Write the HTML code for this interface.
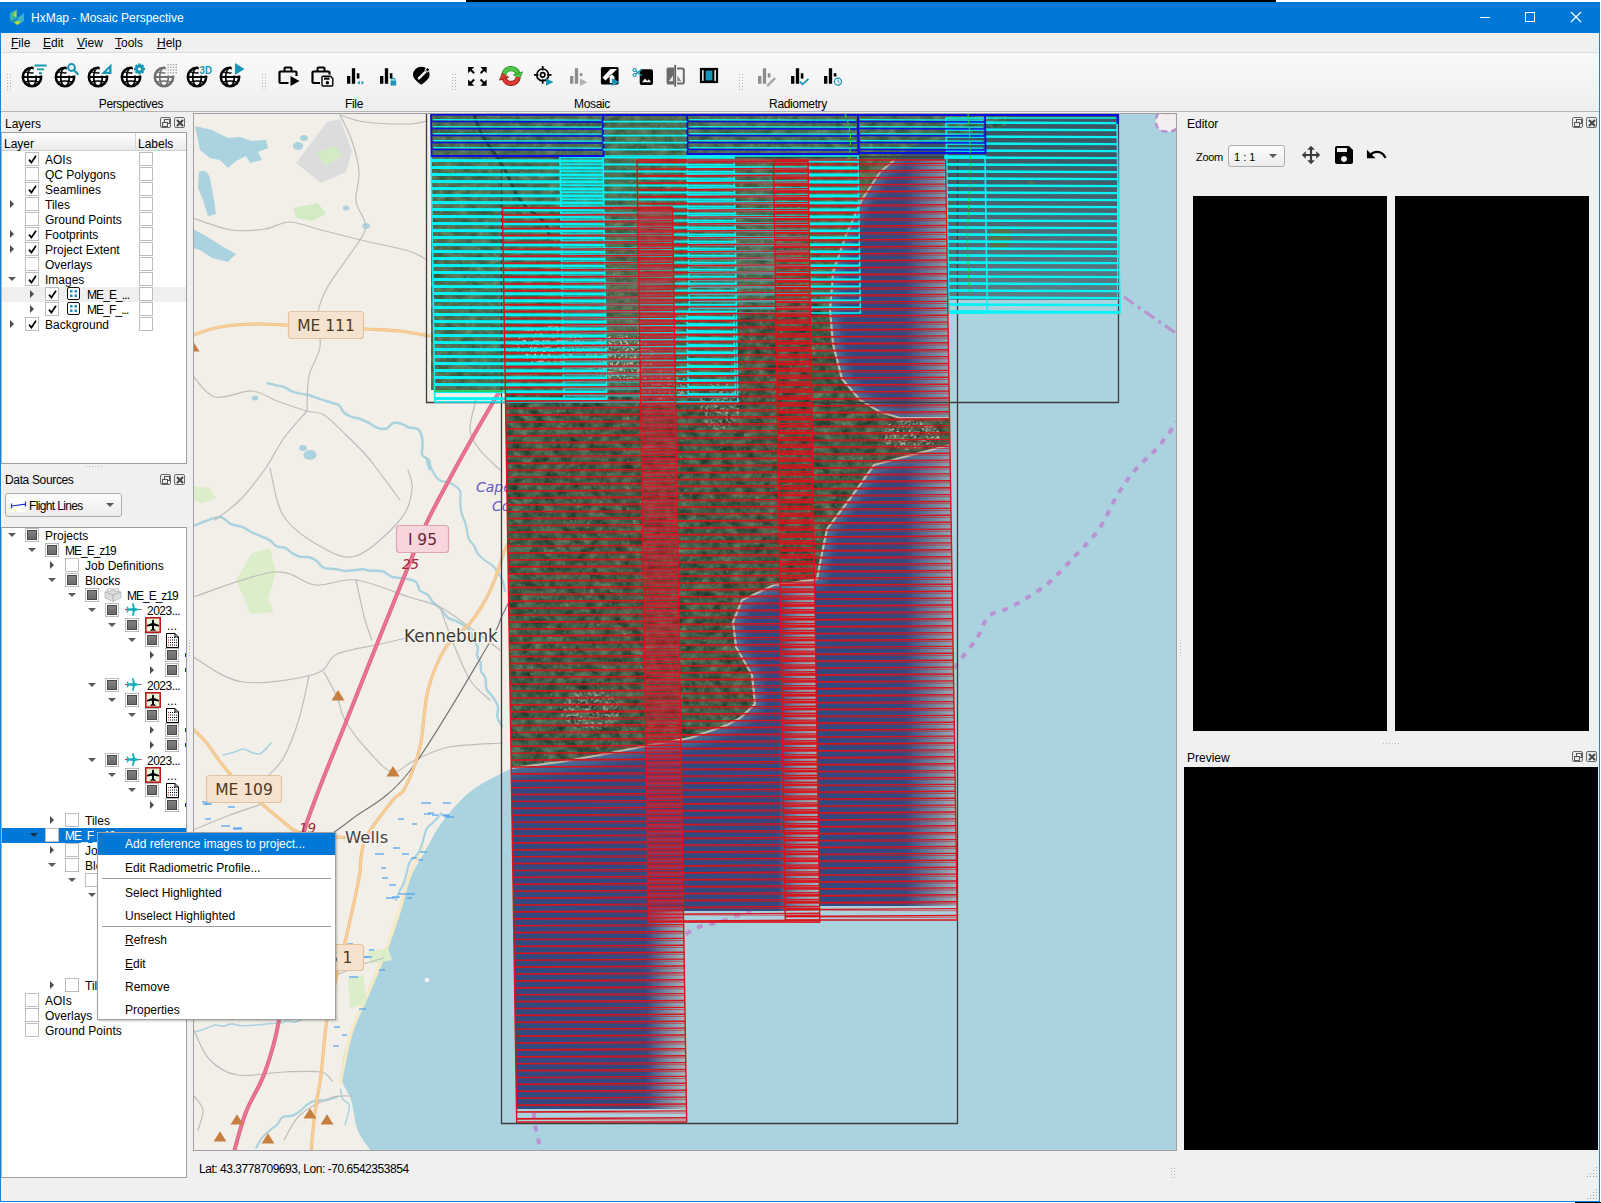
<!DOCTYPE html><html><head><meta charset="utf-8"><title>HxMap - Mosaic Perspective</title><style>
*{box-sizing:border-box;margin:0;padding:0}
html,body{width:1601px;height:1203px;overflow:hidden;background:#f0f0f0}
body{position:relative;font-family:"Liberation Sans","DejaVu Sans",sans-serif;font-size:12px;color:#000;line-height:15px}
.a{position:absolute}
.t{position:absolute;white-space:nowrap;line-height:15px;height:15px}
.cb{position:absolute;width:14px;height:14px;background:#fff;border:1px solid #bdbdbd}
.cb.p::after{content:"";position:absolute;left:1px;top:1px;width:8px;height:8px;background:linear-gradient(#808080,#6a6a6a);border:1px solid #4a4a4a}
.cb.c svg{position:absolute;left:1.500px;top:1.500px}
.ar{position:absolute;width:0;height:0;border-style:solid}
.ar.r{border-width:4px 0 4px 4px;border-color:transparent transparent transparent #4d4d4d}
.ar.d{border-width:4px 4px 0 4px;border-color:#5a5a5a transparent transparent transparent}
.db{position:absolute;width:11px;height:11px;border:1px solid #6b6b6b;border-radius:2px;background:#ededed}
u{text-decoration:underline;text-underline-offset:1px}
</style></head><body><div class="a" style="left:0;top:0;width:1601px;height:2px;background:#fff"></div><div class="a" style="left:466px;top:0;width:810px;height:2px;background:#000"></div><div class="a" style="left:1600px;top:0;width:1px;height:1203px;background:#fff"></div><div class="a" style="left:0;top:1202px;width:1601px;height:1px;background:#fff"></div><div class="a" style="left:1575px;top:1202px;width:26px;height:1px;background:#000"></div><div class="a" style="left:0;top:2px;width:1600px;height:1200px;border:1px solid #1883d7;border-top:none;background:#f0f0f0"></div><div class="a" style="left:0;top:2px;width:1600px;height:31px;background:#0078d7"></div><svg class="a" style="left:9px;top:9px" width="16" height="17" viewBox="0 0 16 17"><path d="M1 4L7.500 0.500V9L1 12Z" fill="#3db0b0"/><path d="M4 6L7.500 0.500V9Z" fill="#a6d63a"/><path d="M8.500 9L15 4V12L8.500 16Z" fill="#3ab4c4"/><path d="M1 12L7.500 9L8.500 16L5 13.500Z" fill="#2a9aa8"/><path d="M5 13.500L8.500 16L12 12.500L8 12Z" fill="#b5dc3c"/></svg><div class="t" style="left:31px;top:11px;color:#fff">HxMap - Mosaic Perspective</div><svg class="a" style="left:1470px;top:2px" width="130" height="31" viewBox="0 0 130 31"><g stroke="#fff" stroke-width="1" fill="none"><path d="M10 15.500H20"/><rect x="55.500" y="10.500" width="9" height="9"/><path d="M101 10L111 20M111 10L101 20" stroke-width="1.200"/></g></svg><div class="a" style="left:1px;top:33px;width:1598px;height:19px;background:#f0f0f0"></div><div class="a" style="left:1px;top:52px;width:1598px;height:1px;background:#dcdcdc"></div><div class="t" style="left:11px;top:36px;"><u>F</u>ile</div><div class="t" style="left:43px;top:36px;"><u>E</u>dit</div><div class="t" style="left:77px;top:36px;"><u>V</u>iew</div><div class="t" style="left:115px;top:36px;"><u>T</u>ools</div><div class="t" style="left:157px;top:36px;"><u>H</u>elp</div><div class="a" style="left:1px;top:53px;width:1598px;height:58px;background:linear-gradient(#fafafa,#f3f3f3 60%,#eeeeee)"></div><div class="a" style="left:1px;top:111px;width:1598px;height:1px;background:#b4b4b4"></div><svg class="a" style="left:0;top:0" width="0" height="0"><defs><clipPath id="gclip"><path d="M0 0H16.500V14.500H30V30H0Z"/></clipPath></defs></svg><div class="a" style="left:6px;top:73px;width:5px;height:18px;background-image:radial-gradient(circle,#b0b0b0 0.700px,transparent 1px);background-size:3px 3px"></div><div class="a" style="left:261px;top:73px;width:5px;height:18px;background-image:radial-gradient(circle,#b0b0b0 0.700px,transparent 1px);background-size:3px 3px"></div><div class="a" style="left:451px;top:73px;width:5px;height:18px;background-image:radial-gradient(circle,#b0b0b0 0.700px,transparent 1px);background-size:3px 3px"></div><div class="a" style="left:738px;top:73px;width:5px;height:18px;background-image:radial-gradient(circle,#b0b0b0 0.700px,transparent 1px);background-size:3px 3px"></div><svg class="a" style="left:17px;top:61px" width="30" height="30" viewBox="0 0 30 30"><g fill="none" stroke="#000" stroke-width="2.5" clip-path="url(#gclip)">
<circle cx="15" cy="16" r="9.2"/><ellipse cx="15" cy="16" rx="4.3" ry="9.2" stroke-width="1.700"/>
<path d="M6 16H24" stroke-width="1.800"/><path d="M7.500 10.600Q15 13.200 22.500 10.600M7.500 21.400Q15 18.800 22.500 21.400" stroke-width="1.500"/></g><path d="M17.500 4.500H29.500M20 8.400H27M22 12.300H25" stroke="#1796b5" stroke-width="1.900" fill="none"/></svg><svg class="a" style="left:50px;top:61px" width="30" height="30" viewBox="0 0 30 30"><g fill="none" stroke="#000" stroke-width="2.5" clip-path="url(#gclip)">
<circle cx="15" cy="16" r="9.2"/><ellipse cx="15" cy="16" rx="4.3" ry="9.2" stroke-width="1.700"/>
<path d="M6 16H24" stroke-width="1.800"/><path d="M7.500 10.600Q15 13.200 22.500 10.600M7.500 21.400Q15 18.800 22.500 21.400" stroke-width="1.500"/></g><circle cx="21.500" cy="6.500" r="3.400" fill="none" stroke="#1796b5" stroke-width="2"/><path d="M24 9.200L28.500 13.800" stroke="#1796b5" stroke-width="2.300"/></svg><svg class="a" style="left:83px;top:61px" width="30" height="30" viewBox="0 0 30 30"><g fill="none" stroke="#000" stroke-width="2.5" clip-path="url(#gclip)">
<circle cx="15" cy="16" r="9.2"/><ellipse cx="15" cy="16" rx="4.3" ry="9.2" stroke-width="1.700"/>
<path d="M6 16H24" stroke-width="1.800"/><path d="M7.500 10.600Q15 13.200 22.500 10.600M7.500 21.400Q15 18.800 22.500 21.400" stroke-width="1.500"/></g><path d="M28.500 2.500V13H18Z M26.200 7.800V10.800H23.200Z" fill="#1796b5" fill-rule="evenodd"/></svg><svg class="a" style="left:116px;top:61px" width="30" height="30" viewBox="0 0 30 30"><g fill="none" stroke="#000" stroke-width="2.5" clip-path="url(#gclip)">
<circle cx="15" cy="16" r="9.2"/><ellipse cx="15" cy="16" rx="4.3" ry="9.2" stroke-width="1.700"/>
<path d="M6 16H24" stroke-width="1.800"/><path d="M7.500 10.600Q15 13.200 22.500 10.600M7.500 21.400Q15 18.800 22.500 21.400" stroke-width="1.500"/></g><circle cx="23.500" cy="8" r="3.100" fill="none" stroke="#1796b5" stroke-width="2.600"/><g stroke="#1796b5" stroke-width="2.300"><path d="M23.500 2.500V13.500M18 8H29M19.600 4.100L27.400 11.900M27.400 4.100L19.600 11.900"/></g><circle cx="23.500" cy="8" r="1.600" fill="#f8f8f8"/></svg><svg class="a" style="left:149px;top:61px" width="30" height="30" viewBox="0 0 30 30"><g fill="none" stroke="#6e6e6e" stroke-width="2.5" clip-path="url(#gclip)">
<circle cx="15" cy="16" r="9.2"/><ellipse cx="15" cy="16" rx="4.3" ry="9.2" stroke-width="1.700"/>
<path d="M6 16H24" stroke-width="1.800"/><path d="M7.500 10.600Q15 13.200 22.500 10.600M7.500 21.400Q15 18.800 22.500 21.400" stroke-width="1.500"/></g><rect x="18.5" y="3.0" width="1.300" height="1.300" fill="#9a9a9a"/><rect x="18.5" y="5.7" width="1.300" height="1.300" fill="#9a9a9a"/><rect x="18.5" y="8.4" width="1.300" height="1.300" fill="#9a9a9a"/><rect x="18.5" y="11.1" width="1.300" height="1.300" fill="#9a9a9a"/><rect x="21.2" y="3.0" width="1.300" height="1.300" fill="#9a9a9a"/><rect x="21.2" y="5.7" width="1.300" height="1.300" fill="#9a9a9a"/><rect x="21.2" y="8.4" width="1.300" height="1.300" fill="#9a9a9a"/><rect x="21.2" y="11.1" width="1.300" height="1.300" fill="#9a9a9a"/><rect x="23.9" y="3.0" width="1.300" height="1.300" fill="#9a9a9a"/><rect x="23.9" y="5.7" width="1.300" height="1.300" fill="#9a9a9a"/><rect x="23.9" y="8.4" width="1.300" height="1.300" fill="#9a9a9a"/><rect x="23.9" y="11.1" width="1.300" height="1.300" fill="#9a9a9a"/><rect x="26.6" y="3.0" width="1.300" height="1.300" fill="#9a9a9a"/><rect x="26.6" y="5.7" width="1.300" height="1.300" fill="#9a9a9a"/><rect x="26.6" y="8.4" width="1.300" height="1.300" fill="#9a9a9a"/><rect x="26.6" y="11.1" width="1.300" height="1.300" fill="#9a9a9a"/></svg><svg class="a" style="left:182px;top:61px" width="30" height="30" viewBox="0 0 30 30"><g fill="none" stroke="#000" stroke-width="2.5" clip-path="url(#gclip)">
<circle cx="15" cy="16" r="9.2"/><ellipse cx="15" cy="16" rx="4.3" ry="9.2" stroke-width="1.700"/>
<path d="M6 16H24" stroke-width="1.800"/><path d="M7.500 10.600Q15 13.200 22.500 10.600M7.500 21.400Q15 18.800 22.500 21.400" stroke-width="1.500"/></g><text x="17.500" y="12.500" font-family="Liberation Sans,sans-serif" font-weight="bold" font-size="11" fill="#1796b5" textLength="12.500" lengthAdjust="spacingAndGlyphs">3D</text></svg><svg class="a" style="left:215px;top:61px" width="30" height="30" viewBox="0 0 30 30"><g fill="none" stroke="#000" stroke-width="2.5" clip-path="url(#gclip)">
<circle cx="15" cy="16" r="9.2"/><ellipse cx="15" cy="16" rx="4.3" ry="9.2" stroke-width="1.700"/>
<path d="M6 16H24" stroke-width="1.800"/><path d="M7.500 10.600Q15 13.200 22.500 10.600M7.500 21.400Q15 18.800 22.500 21.400" stroke-width="1.500"/></g><path d="M20 2L29.500 8L20 14Z" fill="#1796b5"/></svg><svg class="a" style="left:274px;top:62px" width="28" height="28" viewBox="0 0 28 28"><path d="M14.500 21H6.500a1 1 0 0 1-1-1V10.500a1 1 0 0 1 1-1H21.500a1 1 0 0 1 1 1V14" fill="none" stroke="#000" stroke-width="2.200"/><path d="M10.500 9V6.500a1 1 0 0 1 1-1H16.500a1 1 0 0 1 1 1V9" fill="none" stroke="#000" stroke-width="2"/><path d="M16.500 14L25.500 19L16.500 24Z" fill="#000"/></svg><svg class="a" style="left:307px;top:62px" width="28" height="28" viewBox="0 0 28 28"><path d="M13 21H6.500a1 1 0 0 1-1-1V10.500a1 1 0 0 1 1-1H21.500a1 1 0 0 1 1 1V12.500" fill="none" stroke="#000" stroke-width="2.200"/><path d="M10.500 9V6.500a1 1 0 0 1 1-1H16.500a1 1 0 0 1 1 1V9" fill="none" stroke="#000" stroke-width="2"/><path d="M16 14.200H23.500L25.800 16.500V23a1 1 0 0 1-1 1H16a1 1 0 0 1-1-1V15.200a1 1 0 0 1 1-1Z" fill="none" stroke="#000" stroke-width="1.400"/><rect x="17" y="15.500" width="5.500" height="2.200" fill="#000"/><circle cx="20.400" cy="20.800" r="1.700" fill="#000"/></svg><svg class="a" style="left:340px;top:62px" width="28" height="28" viewBox="0 0 28 28"><path d="M8.700 21.700V14M13.500 21.700V6.300" stroke="#000" stroke-width="3.300" fill="none"/><path d="M18.100 16.6V11.200" stroke="#000" stroke-width="2.600" fill="none"/><path d="M19.800 18.600L17.400 20.700L19.800 22.800ZM21.600 18.600L24 20.700L21.600 22.800Z" fill="#1796b5"/></svg><svg class="a" style="left:373px;top:62px" width="28" height="28" viewBox="0 0 28 28"><path d="M8.700 21.700V14M13.500 21.700V6.300" stroke="#000" stroke-width="3.300" fill="none"/><path d="M18.100 16.6V11.200" stroke="#000" stroke-width="2.600" fill="none"/><rect x="17.600" y="18.500" width="5.600" height="5" rx=".6" fill="#1796b5"/><path d="M18.900 18.500V17.600a1.500 1.500 0 0 1 3 0V18.500" fill="none" stroke="#1796b5" stroke-width="1.200"/></svg><svg class="a" style="left:407px;top:62px" width="28" height="28" viewBox="0 0 28 28"><path d="M14.300 4.700a8.300 8.300 0 0 1 8.300 8.100c0 4.200-4.800 7.400-8.300 10c-3.500-2.600-8.300-5.800-8.300-10a8.300 8.300 0 0 1 8.300-8.100Z" fill="#000"/><path d="M10.800 15.800L17.800 8.800L19.500 10.500L12.500 17.500H10.800Z" fill="#f8f8f8"/><path d="M17.300 7.800L20.300 4.800L23.300 7.800L20.300 10.800Z" fill="#f8f8f8"/><path d="M18.800 7.700L20.500 6L22.300 7.700L20.500 9.400Z" fill="#000"/></svg><svg class="a" style="left:465.400px;top:63.700px" width="24.720" height="24.720" viewBox="0 0 24 24"><path d="M15 3l2.300 2.300-2.890 2.870 1.420 1.420L18.700 6.700 21 9V3zM3 9l2.300-2.300 2.870 2.890 1.420-1.420L6.700 5.300 9 3H3zm6 12l-2.300-2.300 2.890-2.870-1.420-1.420L5.300 17.300 3 15v6zm12-6l-2.300 2.300-2.870-2.890-1.420 1.420 2.890 2.870L15 21h6z" fill="#000"/></svg><svg class="a" style="left:497px;top:62px" width="28" height="28" viewBox="0 0 28 28"><path d="M6.800 12.700A7.300 7.300 0 0 1 20.900 11.500" fill="none" stroke="#2e8a2c" stroke-width="5.200"/><path d="M6.800 12.700A7.300 7.300 0 0 1 20.900 11.500" fill="none" stroke="#4cc844" stroke-width="3.800"/><path d="M22.800 16.600L25.600 9.800L16.300 12.800Z" fill="#4cc844" stroke="#2e8a2c" stroke-width=".7"/><path d="M21.200 15.300A7.300 7.300 0 0 1 7.100 16.500" fill="none" stroke="#8c1814" stroke-width="5.200"/><path d="M21.200 15.300A7.300 7.300 0 0 1 7.100 16.500" fill="none" stroke="#dc3a30" stroke-width="3.800"/><path d="M5.200 11.400L2.400 18.200L11.700 15.200Z" fill="#dc3a30" stroke="#8c1814" stroke-width=".7"/></svg><svg class="a" style="left:530px;top:62px" width="28" height="28" viewBox="0 0 28 28"><g fill="none" stroke="#000" stroke-width="1.700"><circle cx="12.700" cy="12.900" r="5.900"/><circle cx="12.700" cy="12.900" r="2.200"/><path d="M12.700 4V8.500M12.700 17.300V21.800M4 12.900H8.500M17 12.900H21.500"/></g><path d="M16 16.500L23.600 20.100L16 23.700Z" fill="#1796b5"/></svg><svg class="a" style="left:563px;top:62px" width="28" height="28" viewBox="0 0 28 28"><path d="M8.700 21.700V14M13.500 21.700V6.300" stroke="#8c8c8c" stroke-width="3.300" fill="none"/><path d="M18.100 14V11.200" stroke="#8c8c8c" stroke-width="2.600" fill="none"/><path d="M17 16.500L24.300 20.200L17 23.900Z" fill="#b2b2b2"/></svg><svg class="a" style="left:596px;top:62px" width="28" height="28" viewBox="0 0 28 28"><rect x="4.900" y="5" width="17.700" height="17.500" rx="1.500" fill="#000"/><path d="M6.500 15.500L14.500 7H21L9.500 18.500ZM13.500 13.800L15.500 11.800L18.500 15V21H13.800Z" fill="#f8f8f8" fill-rule="evenodd"/><path d="M16.500 15.500H27V25H16.500Z" fill="#f8f8f8" opacity=".0"/><path d="M15.800 16.300L23.600 20.100L15.800 23.900Z" fill="#1796b5"/></svg><svg class="a" style="left:629px;top:62px" width="28" height="28" viewBox="0 0 28 28"><rect x="10.700" y="7.300" width="13.300" height="15.700" rx="2" fill="#000"/><path d="M13 20.300L16 16.500L18.200 19L19.800 17.300L22 20.300Z" fill="#f8f8f8"/><g stroke="#1796b5" stroke-width="1.200" fill="none"><circle cx="5.600" cy="8" r="1.500"/><circle cx="5.600" cy="13" r="1.500"/><path d="M6.800 9L13 13.800M6.800 12L13 7.200"/></g></svg><svg class="a" style="left:662px;top:62px" width="28" height="28" viewBox="0 0 28 28"><path d="M12 5.600H6.200a1.600 1.600 0 0 0-1.600 1.600V20.900a1.600 1.600 0 0 0 1.600 1.600H12Z" fill="#6a6a6a"/><path d="M15 6.500H20.300a1.500 1.500 0 0 1 1.500 1.500V20.100a1.500 1.500 0 0 1-1.500 1.500H15" fill="none" stroke="#6a6a6a" stroke-width="2"/><path d="M13.200 3V24.700" stroke="#585858" stroke-width="1.700"/><path d="M11 13.500L6.800 19.300H11Z" fill="#ececec"/><path d="M15.300 13.500L19.500 19.300H15.300Z" fill="#8a8a8a"/></svg><svg class="a" style="left:695px;top:62px" width="28" height="28" viewBox="0 0 28 28"><rect x="6" y="7" width="16" height="13" fill="none" stroke="#000" stroke-width="2.200"/><rect x="9.600" y="7.600" width="8.800" height="11.800" fill="#1796b5" stroke="#000" stroke-width="2"/></svg><svg class="a" style="left:751px;top:62px" width="28" height="28" viewBox="0 0 28 28"><path d="M8.700 21.700V14M13.500 21.700V6.300" stroke="#8c8c8c" stroke-width="3.300" fill="none"/><path d="M18.100 15.5V11.200" stroke="#8c8c8c" stroke-width="2.600" fill="none"/><path d="M15.700 22.700L23.200 15.200L25 17L17.500 24.500H15.700Z" fill="#a8a8a8"/></svg><svg class="a" style="left:784px;top:62px" width="28" height="28" viewBox="0 0 28 28"><path d="M8.700 21.700V14M13.500 21.700V6.300" stroke="#000" stroke-width="3.300" fill="none"/><path d="M18.100 16.6V11.200" stroke="#000" stroke-width="2.600" fill="none"/><path d="M15.800 19.600L18.600 22.400L24.500 16.800" fill="none" stroke="#1796b5" stroke-width="1.700"/></svg><svg class="a" style="left:817px;top:62px" width="28" height="28" viewBox="0 0 28 28"><path d="M8.700 21.700V14M13.500 21.700V6.300" stroke="#000" stroke-width="3.300" fill="none"/><path d="M18.100 14.5V11.200" stroke="#000" stroke-width="2.600" fill="none"/><circle cx="21" cy="19.600" r="3.500" fill="#f8f8f8" stroke="#1796b5" stroke-width="1.300"/><path d="M21 17.500V19.900L22.600 20.900" fill="none" stroke="#1796b5" stroke-width="1"/></svg><div class="t" style="left:81px;width:100px;text-align:center;top:97px;letter-spacing:-0.35px">Perspectives</div><div class="t" style="left:304px;width:100px;text-align:center;top:97px;letter-spacing:-0.35px">File</div><div class="t" style="left:542px;width:100px;text-align:center;top:97px;letter-spacing:-0.35px">Mosaic</div><div class="t" style="left:748px;width:100px;text-align:center;top:97px;letter-spacing:-0.35px">Radiometry</div><div class="t" style="left:5px;top:117px;">Layers</div><div class="db" style="left:160px;top:117px"><svg class="a" style="left:.5px;top:.5px" width="8" height="8" viewBox="0 0 8 8"><rect x="2.5" y="0.5" width="5" height="4" fill="none" stroke="#555"/><rect x="0.5" y="3.5" width="5" height="4" fill="#ededed" stroke="#555"/></svg></div><div class="db" style="left:174px;top:117px"><svg class="a" style="left:.5px;top:.5px" width="8" height="8" viewBox="0 0 8 8"><path d="M1 1L7 7M7 1L1 7" stroke="#444" stroke-width="2"/></svg></div><div class="a" style="left:1px;top:132px;width:186px;height:332px;background:#fff;border:1px solid #9a9da3;border-left-color:#b0b0b0"></div><div class="a" style="left:2px;top:133px;width:184px;height:18px;background:linear-gradient(#fff,#f4f4f4 50%,#e9e9e9);border-bottom:1px solid #d0d0d0"></div><div class="a" style="left:135px;top:133px;width:1px;height:17px;background:#d4d4d4"></div><div class="t" style="left:4px;top:137px;">Layer</div><div class="t" style="left:138px;top:137px;">Labels</div><div class="cb c" style="left:25px;top:152px"><svg width="9" height="9" viewBox="0 0 9 9"><path d="M1 4.6 L3.4 7.6 L8 0.8" fill="none" stroke="#000" stroke-width="1.7"/></svg></div><div class="t" style="left:45px;top:153px;">AOIs</div><div class="cb" style="left:139px;top:152px"></div><div class="cb" style="left:25px;top:167px"></div><div class="t" style="left:45px;top:168px;">QC Polygons</div><div class="cb" style="left:139px;top:167px"></div><div class="cb c" style="left:25px;top:182px"><svg width="9" height="9" viewBox="0 0 9 9"><path d="M1 4.6 L3.4 7.6 L8 0.8" fill="none" stroke="#000" stroke-width="1.7"/></svg></div><div class="t" style="left:45px;top:183px;">Seamlines</div><div class="cb" style="left:139px;top:182px"></div><div class="ar r" style="left:10px;top:200px"></div><div class="cb" style="left:25px;top:197px"></div><div class="t" style="left:45px;top:198px;">Tiles</div><div class="cb" style="left:139px;top:197px"></div><div class="cb" style="left:25px;top:212px"></div><div class="t" style="left:45px;top:213px;">Ground Points</div><div class="cb" style="left:139px;top:212px"></div><div class="ar r" style="left:10px;top:230px"></div><div class="cb c" style="left:25px;top:227px"><svg width="9" height="9" viewBox="0 0 9 9"><path d="M1 4.6 L3.4 7.6 L8 0.8" fill="none" stroke="#000" stroke-width="1.7"/></svg></div><div class="t" style="left:45px;top:228px;">Footprints</div><div class="cb" style="left:139px;top:227px"></div><div class="ar r" style="left:10px;top:245px"></div><div class="cb c" style="left:25px;top:242px"><svg width="9" height="9" viewBox="0 0 9 9"><path d="M1 4.6 L3.4 7.6 L8 0.8" fill="none" stroke="#000" stroke-width="1.7"/></svg></div><div class="t" style="left:45px;top:243px;">Project Extent</div><div class="cb" style="left:139px;top:242px"></div><div class="cb" style="left:25px;top:257px"></div><div class="t" style="left:45px;top:258px;">Overlays</div><div class="cb" style="left:139px;top:257px"></div><div class="ar d" style="left:8px;top:277px"></div><div class="cb c" style="left:25px;top:272px"><svg width="9" height="9" viewBox="0 0 9 9"><path d="M1 4.6 L3.4 7.6 L8 0.8" fill="none" stroke="#000" stroke-width="1.7"/></svg></div><div class="t" style="left:45px;top:273px;">Images</div><div class="cb" style="left:139px;top:272px"></div><div class="a" style="left:2px;top:287px;width:184px;height:15px;background:#efefef"></div><div class="ar r" style="left:30px;top:290px"></div><div class="cb c" style="left:45px;top:287px"><svg width="9" height="9" viewBox="0 0 9 9"><path d="M1 4.6 L3.4 7.6 L8 0.8" fill="none" stroke="#000" stroke-width="1.7"/></svg></div><svg class="a" style="left:67px;top:287px" width="13" height="13" viewBox="0 0 13 13"><rect x=".5" y=".5" width="12" height="12" rx="1.500" fill="#fff" stroke="#111"/><g fill="#1a8fc0"><rect x="3" y="3" width="2.500" height="2.500"/><rect x="7.500" y="3" width="2.500" height="2.500"/><rect x="3" y="7.500" width="2.500" height="2.500"/><rect x="7.500" y="7.500" width="2.500" height="2.500"/></g></svg><div class="t" style="left:87px;top:288px;letter-spacing:-0.9px">ME_E_...</div><div class="cb" style="left:139px;top:287px"></div><div class="ar r" style="left:30px;top:305px"></div><div class="cb c" style="left:45px;top:302px"><svg width="9" height="9" viewBox="0 0 9 9"><path d="M1 4.6 L3.4 7.6 L8 0.8" fill="none" stroke="#000" stroke-width="1.7"/></svg></div><svg class="a" style="left:67px;top:302px" width="13" height="13" viewBox="0 0 13 13"><rect x=".5" y=".5" width="12" height="12" rx="1.500" fill="#fff" stroke="#111"/><g fill="#1a8fc0"><rect x="3" y="3" width="2.500" height="2.500"/><rect x="7.500" y="3" width="2.500" height="2.500"/><rect x="3" y="7.500" width="2.500" height="2.500"/><rect x="7.500" y="7.500" width="2.500" height="2.500"/></g></svg><div class="t" style="left:87px;top:303px;letter-spacing:-0.9px">ME_F_...</div><div class="cb" style="left:139px;top:302px"></div><div class="ar r" style="left:10px;top:320px"></div><div class="cb c" style="left:25px;top:317px"><svg width="9" height="9" viewBox="0 0 9 9"><path d="M1 4.6 L3.4 7.6 L8 0.8" fill="none" stroke="#000" stroke-width="1.7"/></svg></div><div class="t" style="left:45px;top:318px;">Background</div><div class="cb" style="left:139px;top:317px"></div><div class="a" style="left:86px;top:466px;width:17px;height:1px;background-image:linear-gradient(90deg,#b8b8b8 1px,transparent 1px);background-size:3px 1px"></div><div class="t" style="left:5px;top:473px;letter-spacing:-0.35px">Data Sources</div><div class="db" style="left:160px;top:474px"><svg class="a" style="left:.5px;top:.5px" width="8" height="8" viewBox="0 0 8 8"><rect x="2.5" y="0.5" width="5" height="4" fill="none" stroke="#555"/><rect x="0.5" y="3.5" width="5" height="4" fill="#ededed" stroke="#555"/></svg></div><div class="db" style="left:174px;top:474px"><svg class="a" style="left:.5px;top:.5px" width="8" height="8" viewBox="0 0 8 8"><path d="M1 1L7 7M7 1L1 7" stroke="#444" stroke-width="2"/></svg></div><div class="a" style="left:5px;top:493px;width:117px;height:24px;border:1px solid #adadad;border-radius:3px;background:linear-gradient(#fdfdfd,#ececec)"></div><svg class="a" style="left:10px;top:498px" width="18" height="14" viewBox="0 0 18 14"><rect width="17" height="14" fill="#fff"/><path d="M1.500 5.500V10.500M1.500 8L15.500 6.200M15.500 3.500V8.500" stroke="#1c2ce0" stroke-width="1.200" fill="none"/></svg><div class="t" style="left:29px;top:499px;letter-spacing:-0.65px">Flight Lines</div><div class="ar d" style="left:106px;top:503px"></div><div class="a" style="left:1px;top:527px;width:186px;height:651px;background:#fff;border:1px solid #9a9da3;border-left-color:#b0b0b0"></div><div class="ar d" style="left:8px;top:533px"></div><div class="cb p" style="left:25px;top:528px"></div><div class="t" style="left:45px;top:529px;">Projects</div><div class="ar d" style="left:28px;top:548px"></div><div class="cb p" style="left:45px;top:543px"></div><div class="t" style="left:65px;top:544px;"><span style="letter-spacing:-1px">ME_E_z19</span></div><div class="ar r" style="left:50px;top:561px"></div><div class="cb" style="left:65px;top:558px"></div><div class="t" style="left:85px;top:559px;">Job Definitions</div><div class="ar d" style="left:48px;top:578px"></div><div class="cb p" style="left:65px;top:573px"></div><div class="t" style="left:85px;top:574px;">Blocks</div><div class="ar d" style="left:68px;top:593px"></div><div class="cb p" style="left:85px;top:588px"></div><svg class="a" style="left:104px;top:587px" width="18" height="15" viewBox="0 0 18 15"><path d="M1 5L9 2L17 5V11L9 14.500L1 11Z" fill="#dcdcdc" stroke="#b4b4b4" stroke-width=".7"/><path d="M1 5L9 8L17 5M9 8V14.500" stroke="#a8a8a8" stroke-width=".8" fill="none"/><ellipse cx="5.500" cy="3" rx="2.600" ry="1.500" fill="#efefef" stroke="#b0b0b0" stroke-width=".7"/><ellipse cx="12.500" cy="3" rx="2.600" ry="1.500" fill="#efefef" stroke="#b0b0b0" stroke-width=".7"/></svg><div class="t" style="left:127px;top:589px;"><span style="letter-spacing:-1px">ME_E_z19</span></div><div class="ar d" style="left:88px;top:608px"></div><div class="cb p" style="left:105px;top:603px"></div><svg class="a" style="left:125px;top:602px" width="17" height="15" viewBox="0 0 17 15"><path d="M0 7.500H17" stroke="#e03030" stroke-width="1" stroke-dasharray="3 1.500"/><path d="M8.500 1L10 6L16 7.500L10 9L8.500 14L7 13.500L7.800 9L4 8.500L2.500 10.500H1.500L2.200 7.500L1.500 4.500H2.500L4 6.500L7.800 6L7 1.500Z" fill="#18b0b8"/></svg><div class="t" style="left:147px;top:604px;"><span style="letter-spacing:-0.5px">2023...</span></div><div class="ar d" style="left:108px;top:623px"></div><div class="cb p" style="left:125px;top:618px"></div><svg class="a" style="left:145px;top:617px" width="16" height="16" viewBox="0 0 16 16"><rect x=".8" y=".8" width="14.400" height="14.400" fill="#e6f5da" stroke="#c01818" stroke-width="1.600"/><path d="M8 2.500C9 2.500 9 4 9 6L14 8V9.500L9 8.800V12L10.500 13V14L8 13.500L5.500 14V13L7 12V8.800L2 9.500V8L7 6C7 4 7 2.500 8 2.500Z" fill="#000"/></svg><div class="t" style="left:167px;top:619px;">...</div><div class="ar d" style="left:128px;top:638px"></div><div class="cb p" style="left:145px;top:633px"></div><svg class="a" style="left:166px;top:632px" width="13" height="16" viewBox="0 0 13 16"><path d="M.5 1.500H9L12.500 5V15.500H.5Z" fill="#fff" stroke="#000"/><path d="M9 1.500V5H12.500" fill="none" stroke="#000"/><g stroke="#000" stroke-width="1" stroke-dasharray="1 1"><path d="M4 5.500H9M4 8H11M4 10.500H11M4 13H11"/></g><g fill="#e02020"><rect x="2" y="5" width="1" height="1"/><rect x="2" y="7.500" width="1" height="1"/><rect x="2" y="10" width="1" height="1"/><rect x="2" y="12.500" width="1" height="1"/></g></svg><div class="ar r" style="left:150px;top:651px"></div><div class="cb p" style="left:165px;top:648px"></div><div class="a" style="left:185px;top:653px;width:1px;height:4px;background:#1c2ce0"></div><div class="ar r" style="left:150px;top:666px"></div><div class="cb p" style="left:165px;top:663px"></div><div class="a" style="left:185px;top:668px;width:1px;height:4px;background:#1c2ce0"></div><div class="ar d" style="left:88px;top:683px"></div><div class="cb p" style="left:105px;top:678px"></div><svg class="a" style="left:125px;top:677px" width="17" height="15" viewBox="0 0 17 15"><path d="M0 7.500H17" stroke="#e03030" stroke-width="1" stroke-dasharray="3 1.500"/><path d="M8.500 1L10 6L16 7.500L10 9L8.500 14L7 13.500L7.800 9L4 8.500L2.500 10.500H1.500L2.200 7.500L1.500 4.500H2.500L4 6.500L7.800 6L7 1.500Z" fill="#18b0b8"/></svg><div class="t" style="left:147px;top:679px;"><span style="letter-spacing:-0.5px">2023...</span></div><div class="ar d" style="left:108px;top:698px"></div><div class="cb p" style="left:125px;top:693px"></div><svg class="a" style="left:145px;top:692px" width="16" height="16" viewBox="0 0 16 16"><rect x=".8" y=".8" width="14.400" height="14.400" fill="#e6f5da" stroke="#c01818" stroke-width="1.600"/><path d="M8 2.500C9 2.500 9 4 9 6L14 8V9.500L9 8.800V12L10.500 13V14L8 13.500L5.500 14V13L7 12V8.800L2 9.500V8L7 6C7 4 7 2.500 8 2.500Z" fill="#000"/></svg><div class="t" style="left:167px;top:694px;">...</div><div class="ar d" style="left:128px;top:713px"></div><div class="cb p" style="left:145px;top:708px"></div><svg class="a" style="left:166px;top:707px" width="13" height="16" viewBox="0 0 13 16"><path d="M.5 1.500H9L12.500 5V15.500H.5Z" fill="#fff" stroke="#000"/><path d="M9 1.500V5H12.500" fill="none" stroke="#000"/><g stroke="#000" stroke-width="1" stroke-dasharray="1 1"><path d="M4 5.500H9M4 8H11M4 10.500H11M4 13H11"/></g><g fill="#e02020"><rect x="2" y="5" width="1" height="1"/><rect x="2" y="7.500" width="1" height="1"/><rect x="2" y="10" width="1" height="1"/><rect x="2" y="12.500" width="1" height="1"/></g></svg><div class="ar r" style="left:150px;top:726px"></div><div class="cb p" style="left:165px;top:723px"></div><div class="a" style="left:185px;top:728px;width:1px;height:4px;background:#1c2ce0"></div><div class="ar r" style="left:150px;top:741px"></div><div class="cb p" style="left:165px;top:738px"></div><div class="a" style="left:185px;top:743px;width:1px;height:4px;background:#1c2ce0"></div><div class="ar d" style="left:88px;top:758px"></div><div class="cb p" style="left:105px;top:753px"></div><svg class="a" style="left:125px;top:752px" width="17" height="15" viewBox="0 0 17 15"><path d="M0 7.500H17" stroke="#e03030" stroke-width="1" stroke-dasharray="3 1.500"/><path d="M8.500 1L10 6L16 7.500L10 9L8.500 14L7 13.500L7.800 9L4 8.500L2.500 10.500H1.500L2.200 7.500L1.500 4.500H2.500L4 6.500L7.800 6L7 1.500Z" fill="#18b0b8"/></svg><div class="t" style="left:147px;top:754px;"><span style="letter-spacing:-0.5px">2023...</span></div><div class="ar d" style="left:108px;top:773px"></div><div class="cb p" style="left:125px;top:768px"></div><svg class="a" style="left:145px;top:767px" width="16" height="16" viewBox="0 0 16 16"><rect x=".8" y=".8" width="14.400" height="14.400" fill="#e6f5da" stroke="#c01818" stroke-width="1.600"/><path d="M8 2.500C9 2.500 9 4 9 6L14 8V9.500L9 8.800V12L10.500 13V14L8 13.500L5.500 14V13L7 12V8.800L2 9.500V8L7 6C7 4 7 2.500 8 2.500Z" fill="#000"/></svg><div class="t" style="left:167px;top:769px;">...</div><div class="ar d" style="left:128px;top:788px"></div><div class="cb p" style="left:145px;top:783px"></div><svg class="a" style="left:166px;top:782px" width="13" height="16" viewBox="0 0 13 16"><path d="M.5 1.500H9L12.500 5V15.500H.5Z" fill="#fff" stroke="#000"/><path d="M9 1.500V5H12.500" fill="none" stroke="#000"/><g stroke="#000" stroke-width="1" stroke-dasharray="1 1"><path d="M4 5.500H9M4 8H11M4 10.500H11M4 13H11"/></g><g fill="#e02020"><rect x="2" y="5" width="1" height="1"/><rect x="2" y="7.500" width="1" height="1"/><rect x="2" y="10" width="1" height="1"/><rect x="2" y="12.500" width="1" height="1"/></g></svg><div class="ar r" style="left:150px;top:801px"></div><div class="cb p" style="left:165px;top:798px"></div><div class="a" style="left:185px;top:803px;width:1px;height:4px;background:#1c2ce0"></div><div class="ar r" style="left:50px;top:816px"></div><div class="cb" style="left:65px;top:813px"></div><div class="t" style="left:85px;top:814px;">Tiles</div><div class="a" style="left:2px;top:828px;width:184px;height:15px;background:#0078d7"></div><div class="ar d" style="left:30px;top:833px;border-top-color:#1f2f40"></div><div class="cb" style="left:45px;top:828px"></div><div class="t" style="left:65px;top:829px;color:#fff;letter-spacing:-1px">ME_F_z19</div><div class="ar r" style="left:50px;top:846px"></div><div class="cb" style="left:65px;top:843px"></div><div class="t" style="left:85px;top:844px;">Job Definitions</div><div class="ar d" style="left:48px;top:863px"></div><div class="cb" style="left:65px;top:858px"></div><div class="t" style="left:85px;top:859px;">Blocks</div><div class="ar d" style="left:68px;top:878px"></div><div class="cb" style="left:85px;top:873px"></div><div class="ar d" style="left:88px;top:893px"></div><div class="ar r" style="left:50px;top:981px"></div><div class="cb" style="left:65px;top:978px"></div><div class="t" style="left:85px;top:979px;">Tiles</div><div class="cb" style="left:25px;top:993px"></div><div class="t" style="left:45px;top:994px;">AOIs</div><div class="cb" style="left:25px;top:1008px"></div><div class="t" style="left:45px;top:1009px;">Overlays</div><div class="cb" style="left:25px;top:1023px"></div><div class="t" style="left:45px;top:1024px;">Ground Points</div><div class="a" style="left:193px;top:113px;width:984px;height:1038px;background:#f2efe9;border:1px solid #a0a0a0;overflow:hidden"><svg style="position:absolute;left:-194px;top:-114px" width="1601" height="1203" viewBox="0 0 1601 1203"><rect x="193" y="113" width="985" height="1040" fill="#f2efe9"/><path d="M372.0 1152.0C369.7 1148.5 361.5 1139.7 358.0 1131.0C354.5 1122.3 353.8 1109.3 351.0 1100.0C348.2 1090.7 341.3 1085.5 341.0 1075.0C340.7 1064.5 345.0 1049.5 349.0 1037.0C353.0 1024.5 359.7 1012.5 365.0 1000.0C370.3 987.5 375.8 974.5 381.0 962.0C386.2 949.5 391.3 938.5 396.0 925.0C400.7 911.5 404.3 893.0 409.0 881.0C413.7 869.0 418.8 862.3 424.0 853.0C429.2 843.7 433.7 834.0 440.0 825.0C446.3 816.0 455.3 805.7 462.0 799.0C468.7 792.3 471.7 790.2 480.0 785.0C488.3 779.8 506.7 770.8 512.0 768.0 L520 700 L520 300 L1000 100 L1180 100 L1180 1160 L372 1160Z" fill="#aad3df"/><path d="M1158 113Q1152 126 1162 131Q1172 133 1178 128V113Z" fill="#f4eef0" stroke="#b992d2" stroke-width="2.6" stroke-dasharray="6 4"/><path d="M424.0 846.0C423.0 847.7 420.7 850.3 418.0 856.0C415.3 861.7 411.3 870.2 408.0 880.0C404.7 889.8 402.0 902.5 398.0 915.0C394.0 927.5 389.0 942.0 384.0 955.0C379.0 968.0 373.3 980.5 368.0 993.0C362.7 1005.5 356.2 1017.5 352.0 1030.0C347.8 1042.5 345.0 1059.0 343.0 1068.0C341.0 1077.0 340.5 1081.3 340.0 1084.0" fill="none" stroke="#f5e9c6" stroke-width="3.5"/><path d="M195 126L212 130L228 138L240 137L252 141L266 140L268 148L258 152L262 160L250 163L246 156L236 161L228 168L220 160L210 158L200 150Z" fill="#aad3df"/><path d="M199 172Q206 168 210 178L214 200L216 214L208 216L203 200L198 188Z" fill="#aad3df"/><path d="M193 229L206 236L222 246L236 254L228 262L212 258L200 250L193 248Z" fill="#aad3df"/><ellipse cx="298" cy="146" rx="5.2" ry="4" fill="#aad3df"/><ellipse cx="304" cy="138" rx="3.9000000000000004" ry="3" fill="#aad3df"/><ellipse cx="366" cy="226" rx="3.9000000000000004" ry="3" fill="#aad3df"/><ellipse cx="346" cy="208" rx="3.25" ry="2.5" fill="#aad3df"/><ellipse cx="310" cy="455" rx="6.5" ry="5" fill="#aad3df"/><ellipse cx="303" cy="448" rx="3.9000000000000004" ry="3" fill="#aad3df"/><ellipse cx="434" cy="233" rx="2.6" ry="2" fill="#aad3df"/><ellipse cx="255" cy="398" rx="3.25" ry="2.5" fill="#aad3df"/><path d="M296 163L327 122L340 119L352 151L346 172L321 183Z" fill="#dcdcdc"/><path d="M316 152L336 146L342 156L326 166Z" fill="#d3ebc4"/><path d="M293 208L318 203L326 214L312 221L296 218Z" fill="#d3ebc4"/><path d="M236 580L252 553L270 548L276 572L268 600L274 612L250 614L244 598Z" fill="#dbeec9"/><path d="M193 486L210 488L216 498L202 503L193 500Z" fill="#dbeec9"/><path d="M367 952L388 948L392 960L372 964Z M348 978L364 975L366 1003L350 1008Z" fill="#dbeec9"/><path d="M193 950L200 958L197 972L193 975Z" fill="#dbeec9"/><path d="M267.6 383.1C269.0 383.5 273.2 384.5 275.9 385.2C278.7 385.8 281.5 386.1 284.2 387.2C286.9 388.2 289.3 390.2 292.0 391.3C294.7 392.4 297.5 393.0 300.3 393.6C303.1 394.2 305.5 394.2 308.7 395.0C311.9 395.9 316.0 397.6 319.6 398.9C323.1 400.1 326.9 401.3 330.1 402.3C333.2 403.4 336.3 403.4 338.6 405.1C340.9 406.8 341.8 410.5 343.9 412.5C346.1 414.5 348.7 415.8 351.5 416.9C354.4 418.0 358.0 418.1 360.9 419.2C363.9 420.2 366.8 421.8 369.4 423.2C372.0 424.6 373.8 426.6 376.6 427.5C379.3 428.5 383.1 429.6 385.9 428.8C388.7 428.0 390.7 423.8 393.3 423.0C395.8 422.1 398.6 422.9 401.3 423.7C403.9 424.4 406.4 426.6 409.1 427.5C411.9 428.4 415.6 427.5 417.8 429.1C419.9 430.6 421.1 434.1 421.9 436.9C422.7 439.6 422.6 442.5 422.6 445.5C422.7 448.5 421.0 452.2 422.1 454.8C423.2 457.3 428.0 458.2 429.2 460.6C430.4 463.0 429.7 469.3 429.4 469.2C429.0 469.1 427.4 461.5 427.0 460.0" fill="none" stroke="#aad3df" stroke-width="2.5" stroke-linecap="round" stroke-linejoin="round"/><path d="M193.1 526.3C195.3 525.4 201.8 522.3 206.4 520.8C210.9 519.3 216.3 516.6 220.4 517.1C224.5 517.7 227.3 522.4 231.1 524.1C234.8 525.7 239.3 525.8 242.9 527.2C246.4 528.7 249.2 531.0 252.4 532.6C255.7 534.2 259.6 535.5 262.5 536.8C265.5 538.1 267.7 538.8 270.1 540.4C272.5 542.0 274.2 545.1 276.7 546.4C279.2 547.6 282.6 546.8 285.2 548.0C287.7 549.1 289.5 551.7 292.0 553.1C294.4 554.6 297.0 555.9 299.8 556.6C302.7 557.3 306.3 556.5 309.1 557.2C311.9 558.0 314.4 559.3 316.8 561.0C319.3 562.7 320.5 566.3 323.6 567.6C326.6 568.9 331.3 568.5 335.0 569.0C338.7 569.6 342.7 570.8 345.9 571.0C349.1 571.1 351.4 570.4 354.2 570.2C357.0 569.9 359.9 569.2 362.6 569.3C365.3 569.4 367.1 570.4 370.4 570.7C373.7 571.1 378.7 570.2 382.4 571.3C386.1 572.3 389.0 575.9 392.7 577.0C396.3 578.2 400.5 577.6 404.3 578.4C408.2 579.2 413.5 579.9 416.1 581.9C418.6 583.9 417.9 588.4 419.9 590.5C421.8 592.7 425.7 592.8 427.9 594.8C430.1 596.7 430.8 599.7 432.9 602.1C435.1 604.4 438.5 606.4 441.0 609.0C443.5 611.6 445.3 615.7 447.9 617.8C450.5 619.8 454.0 620.0 456.8 621.3C459.6 622.7 462.6 624.3 464.9 626.0C467.2 627.8 469.4 629.7 470.7 632.0C472.0 634.4 471.6 637.6 472.8 640.1C474.0 642.6 477.1 644.3 477.8 646.8C478.5 649.4 476.7 652.7 477.1 655.4C477.6 658.0 479.8 660.4 480.5 663.0C481.2 665.6 480.3 668.7 481.1 671.2C482.0 673.8 484.6 675.4 485.5 678.3C486.4 681.3 485.2 685.8 486.5 689.0C487.7 692.1 491.1 694.4 493.0 697.3C494.9 700.2 497.2 703.1 497.9 706.4C498.6 709.7 496.7 713.7 497.4 717.0C498.1 720.3 501.2 724.5 502.0 726.0" fill="none" stroke="#aad3df" stroke-width="2.5" stroke-linecap="round" stroke-linejoin="round"/><path d="M428.3 459.1C429.0 461.0 430.4 466.8 432.3 470.4C434.1 473.9 436.2 478.1 439.2 480.2C442.3 482.4 447.2 481.4 450.7 483.2C454.1 484.9 458.4 487.8 460.0 490.8C461.6 493.9 460.0 498.0 460.2 501.5C460.4 505.0 460.4 508.6 461.2 512.0C462.0 515.4 464.0 518.9 465.0 522.0C466.0 525.1 466.4 527.6 467.0 530.4C467.7 533.2 467.6 536.2 468.8 538.8C470.0 541.4 472.7 543.5 474.2 545.9C475.6 548.3 475.9 551.0 477.6 553.3C479.3 555.7 481.9 558.0 484.3 560.0C486.8 562.0 489.9 563.3 492.2 565.4C494.4 567.5 496.1 569.7 497.9 572.3C499.7 575.0 501.7 578.1 502.8 581.2C504.0 584.3 504.6 589.4 505.0 591.0" fill="none" stroke="#aad3df" stroke-width="2.2" stroke-linecap="round" stroke-linejoin="round"/><path d="M223.4 755.0C225.0 754.6 229.7 753.6 233.1 752.6C236.4 751.6 240.1 749.0 243.3 749.0C246.6 749.0 249.5 752.0 252.5 752.7C255.4 753.4 257.9 754.8 261.0 753.2C264.1 751.6 269.3 744.7 271.0 743.0" fill="none" stroke="#aad3df" stroke-width="1.6" stroke-linecap="round" stroke-linejoin="round"/><path d="M196.2 1031.7C197.8 1031.1 202.7 1029.6 205.9 1028.5C209.0 1027.3 212.0 1025.4 214.9 1025.0C217.8 1024.6 220.4 1026.3 223.2 1026.1C226.0 1025.9 229.0 1024.0 231.8 1023.9C234.6 1023.9 236.9 1025.4 240.0 1025.6C243.0 1025.9 246.7 1025.5 250.1 1025.4C253.5 1025.2 256.9 1025.1 260.2 1024.8C263.5 1024.5 266.9 1023.8 269.9 1023.5C273.0 1023.3 275.7 1023.8 278.6 1023.3C281.5 1022.9 284.6 1021.2 287.4 1021.0C290.2 1020.8 292.5 1022.6 295.6 1022.0C298.8 1021.4 302.6 1018.4 306.4 1017.2C310.1 1016.1 316.1 1015.4 318.0 1015.0" fill="none" stroke="#aad3df" stroke-width="1.6" stroke-linecap="round" stroke-linejoin="round"/><path d="M256.3 1147.5C257.2 1145.9 259.6 1140.8 261.9 1137.9C264.3 1135.0 267.6 1132.3 270.1 1130.1C272.6 1127.9 275.0 1126.8 277.1 1124.6C279.2 1122.4 280.2 1118.5 282.8 1117.0C285.4 1115.5 289.7 1116.7 292.6 1115.6C295.5 1114.6 297.9 1112.7 300.3 1110.8C302.8 1109.0 304.7 1106.3 307.2 1104.6C309.6 1102.9 311.9 1101.3 315.1 1100.6C318.3 1099.8 322.6 1100.8 326.2 1100.2C329.9 1099.6 335.2 1097.5 337.0 1097.0" fill="none" stroke="#aad3df" stroke-width="2.2" stroke-linecap="round" stroke-linejoin="round"/><path d="M441.4 813.2C440.2 814.5 436.9 818.8 434.5 821.3C432.1 823.8 428.7 825.6 426.9 828.3C425.1 831.0 424.9 834.2 423.9 837.3C423.0 840.4 422.4 843.8 421.2 846.7C420.0 849.7 418.7 852.6 416.8 855.1C414.9 857.7 411.4 859.0 409.8 861.9C408.1 864.9 407.7 869.3 406.7 872.9C405.7 876.6 404.8 880.6 403.5 883.8C402.3 886.9 400.6 889.0 399.4 891.7C398.1 894.4 396.6 898.6 396.0 900.0" fill="none" stroke="#aad3df" stroke-width="2.2" stroke-linecap="round" stroke-linejoin="round"/><path d="M340.4 1089.0C340.8 1090.6 341.2 1096.2 342.6 1098.9C344.1 1101.5 348.5 1102.1 349.3 1104.8C350.2 1107.5 348.5 1111.7 347.7 1115.1C347.0 1118.4 345.5 1123.3 345.0 1125.0" fill="none" stroke="#aad3df" stroke-width="1.5" stroke-linecap="round" stroke-linejoin="round"/><path d="M340.0 115.0C342.0 119.3 348.8 131.5 352.0 141.0C355.2 150.5 358.3 162.0 359.0 172.0C359.7 182.0 355.0 192.7 356.0 201.0C357.0 209.3 363.8 216.3 365.0 222.0C366.2 227.7 366.2 228.7 363.0 235.0C359.8 241.3 352.0 251.2 346.0 260.0C340.0 268.8 331.7 279.2 327.0 288.0C322.3 296.8 319.2 303.2 318.0 313.0C316.8 322.8 321.5 336.5 320.0 347.0C318.5 357.5 311.2 365.5 309.0 376.0C306.8 386.5 307.3 404.3 307.0 410.0" fill="none" stroke="#bdbdbd" stroke-width="1.2" stroke-linecap="round"/><path d="M193.0 218.0C199.3 220.0 219.0 228.2 231.0 230.0C243.0 231.8 255.2 230.3 265.0 229.0C274.8 227.7 280.7 221.8 290.0 222.0C299.3 222.2 308.5 226.8 321.0 230.0C333.5 233.2 350.3 237.5 365.0 241.0C379.7 244.5 398.7 247.8 409.0 251.0C419.3 254.2 424.0 258.5 427.0 260.0" fill="none" stroke="#bdbdbd" stroke-width="1.2" stroke-linecap="round"/><path d="M340.0 115.0C344.2 116.2 353.5 120.5 365.0 122.0C376.5 123.5 398.7 124.2 409.0 124.0C419.3 123.8 424.0 121.5 427.0 121.0" fill="none" stroke="#bdbdbd" stroke-width="1.2" stroke-linecap="round"/><path d="M193.0 376.0C196.7 379.5 205.2 394.5 215.0 397.0C224.8 399.5 241.7 390.3 252.0 391.0C262.3 391.7 267.8 397.7 277.0 401.0C286.2 404.3 299.2 408.7 307.0 411.0C314.8 413.3 317.5 411.0 324.0 415.0C330.5 419.0 339.2 428.5 346.0 435.0C352.8 441.5 359.8 448.3 365.0 454.0C370.2 459.7 371.2 461.3 377.0 469.0C382.8 476.7 396.2 494.8 400.0 500.0" fill="none" stroke="#bdbdbd" stroke-width="1.2" stroke-linecap="round"/><path d="M307.0 411.0C303.2 415.5 291.0 428.3 284.0 438.0C277.0 447.7 272.3 458.7 265.0 469.0C257.7 479.3 248.3 491.5 240.0 500.0C231.7 508.5 219.2 516.7 215.0 520.0" fill="none" stroke="#bdbdbd" stroke-width="1.2" stroke-linecap="round"/><path d="M193.0 597.0C206.5 592.8 253.7 574.0 274.0 572.0C294.3 570.0 301.3 583.7 315.0 585.0C328.7 586.3 340.3 578.0 356.0 580.0C371.7 582.0 395.0 592.5 409.0 597.0C423.0 601.5 430.2 602.2 440.0 607.0C449.8 611.8 458.0 618.8 468.0 626.0C478.0 633.2 494.7 646.0 500.0 650.0" fill="none" stroke="#bdbdbd" stroke-width="1.2" stroke-linecap="round"/><path d="M193.0 657.0C201.3 661.2 222.7 679.2 243.0 682.0C263.3 684.8 299.3 678.7 315.0 674.0C330.7 669.3 326.0 659.0 337.0 654.0C348.0 649.0 369.5 646.7 381.0 644.0C392.5 641.3 401.8 639.0 406.0 638.0" fill="none" stroke="#bdbdbd" stroke-width="1.2" stroke-linecap="round"/><path d="M324.0 672.0C326.2 676.2 333.3 688.7 337.0 697.0C340.7 705.3 340.3 712.5 346.0 722.0C351.7 731.5 363.2 745.7 371.0 754.0C378.8 762.3 385.7 771.0 393.0 772.0C400.3 773.0 405.7 764.2 415.0 760.0C424.3 755.8 434.5 749.8 449.0 747.0C463.5 744.2 493.2 743.7 502.0 743.0" fill="none" stroke="#bdbdbd" stroke-width="1.2" stroke-linecap="round"/><path d="M309.0 676.0C307.3 683.2 303.2 705.5 299.0 719.0C294.8 732.5 289.2 747.5 284.0 757.0C278.8 766.5 270.7 772.8 268.0 776.0" fill="none" stroke="#bdbdbd" stroke-width="1.2" stroke-linecap="round"/><path d="M270.0 468.0C272.2 475.8 275.0 502.2 283.0 515.0C291.0 527.8 305.8 538.2 318.0 545.0C330.2 551.8 342.3 560.2 356.0 556.0C369.7 551.8 390.7 531.0 400.0 520.0C409.3 509.0 410.7 498.3 412.0 490.0C413.3 481.7 408.7 473.3 408.0 470.0" fill="none" stroke="#bdbdbd" stroke-width="1.2" stroke-linecap="round"/><path d="M356.0 580.0C357.5 586.7 362.3 610.0 365.0 620.0C367.7 630.0 370.8 636.7 372.0 640.0" fill="none" stroke="#bdbdbd" stroke-width="1.2" stroke-linecap="round"/><path d="M440.0 607.0C442.0 612.5 447.0 627.8 452.0 640.0C457.0 652.2 463.7 670.0 470.0 680.0C476.3 690.0 486.7 696.7 490.0 700.0" fill="none" stroke="#bdbdbd" stroke-width="1.2" stroke-linecap="round"/><path d="M193.0 1028.0C195.7 1033.2 201.7 1051.2 209.0 1059.0C216.3 1066.8 224.5 1072.8 237.0 1075.0C249.5 1077.2 270.0 1072.5 284.0 1072.0C298.0 1071.5 313.0 1070.5 321.0 1072.0C329.0 1073.5 330.2 1079.5 332.0 1081.0" fill="none" stroke="#bdbdbd" stroke-width="1.2" stroke-linecap="round"/><path d="M193.0 830.0C199.2 827.5 218.5 819.3 230.0 815.0C241.5 810.7 256.7 805.8 262.0 804.0" fill="none" stroke="#bdbdbd" stroke-width="1.2" stroke-linecap="round"/><path d="M476.0 400.0C475.0 405.0 469.3 421.7 470.0 430.0C470.7 438.3 475.0 443.3 480.0 450.0C485.0 456.7 496.7 466.7 500.0 470.0" fill="none" stroke="#bdbdbd" stroke-width="1.2" stroke-linecap="round"/><path d="M337.0 975.0C340.8 973.3 352.2 967.8 360.0 965.0C367.8 962.2 380.0 959.2 384.0 958.0" fill="none" stroke="#bdbdbd" stroke-width="1.2" stroke-linecap="round"/><path d="M284.0 1140.0C286.7 1135.8 292.3 1122.0 300.0 1115.0C307.7 1108.0 321.3 1101.2 330.0 1098.0C338.7 1094.8 348.3 1096.3 352.0 1096.0" fill="none" stroke="#bdbdbd" stroke-width="1.2" stroke-linecap="round"/><path d="M193.0 1095.0C194.7 1097.5 202.2 1104.2 203.0 1110.0C203.8 1115.8 198.8 1126.7 198.0 1130.0" fill="none" stroke="#bdbdbd" stroke-width="1.2" stroke-linecap="round"/><path d="M515.0 590.0C512.8 594.3 506.7 606.5 502.0 616.0C497.3 625.5 502.5 621.0 487.0 647.0C471.5 673.0 431.5 743.3 409.0 772.0C386.5 800.7 365.2 808.5 352.0 819.0C338.8 829.5 333.7 832.3 330.0 835.0" fill="none" stroke="#777" stroke-width="1.2" stroke-linecap="round"/><path d="M193.0 335.0C197.5 333.7 209.3 328.8 220.0 327.0C230.7 325.2 243.7 324.2 257.0 324.0C270.3 323.8 282.0 325.2 300.0 326.0C318.0 326.8 348.3 328.2 365.0 329.0C381.7 329.8 389.2 329.8 400.0 331.0C410.8 332.2 425.0 335.2 430.0 336.0" fill="none" stroke="#ecbb80" stroke-width="3.2" stroke-linecap="round"/><path d="M193.0 335.0C197.5 333.7 209.3 328.8 220.0 327.0C230.7 325.2 243.7 324.2 257.0 324.0C270.3 323.8 282.0 325.2 300.0 326.0C318.0 326.8 348.3 328.2 365.0 329.0C381.7 329.8 389.2 329.8 400.0 331.0C410.8 332.2 425.0 335.2 430.0 336.0" fill="none" stroke="#f9cf98" stroke-width="2" stroke-linecap="round"/><path d="M193.0 729.0C195.2 731.2 201.3 736.3 206.0 742.0C210.7 747.7 215.3 755.8 221.0 763.0C226.7 770.2 233.2 778.2 240.0 785.0C246.8 791.8 255.3 798.3 262.0 804.0C268.7 809.7 273.7 814.2 280.0 819.0C286.3 823.8 290.5 830.0 300.0 833.0C309.5 836.0 326.2 836.2 337.0 837.0C347.8 837.8 360.3 837.8 365.0 838.0" fill="none" stroke="#ecbb80" stroke-width="3.2" stroke-linecap="round"/><path d="M193.0 729.0C195.2 731.2 201.3 736.3 206.0 742.0C210.7 747.7 215.3 755.8 221.0 763.0C226.7 770.2 233.2 778.2 240.0 785.0C246.8 791.8 255.3 798.3 262.0 804.0C268.7 809.7 273.7 814.2 280.0 819.0C286.3 823.8 290.5 830.0 300.0 833.0C309.5 836.0 326.2 836.2 337.0 837.0C347.8 837.8 360.3 837.8 365.0 838.0" fill="none" stroke="#f9cf98" stroke-width="2" stroke-linecap="round"/><path d="M515.0 530.0C513.3 533.3 509.2 539.8 505.0 550.0C500.8 560.2 495.7 579.0 490.0 591.0C484.3 603.0 478.3 612.7 471.0 622.0C463.7 631.3 453.2 635.7 446.0 647.0C438.8 658.3 432.3 673.3 428.0 690.0C423.7 706.7 423.8 730.7 420.0 747.0C416.2 763.3 409.5 779.2 405.0 788.0C400.5 796.8 399.7 791.3 393.0 800.0C386.3 808.7 370.7 827.0 365.0 840.0C359.3 853.0 361.7 863.8 359.0 878.0C356.3 892.2 352.7 908.8 349.0 925.0C345.3 941.2 340.7 959.3 337.0 975.0C333.3 990.7 329.7 1002.3 327.0 1019.0C324.3 1035.7 323.0 1059.5 321.0 1075.0C319.0 1090.5 316.7 1099.2 315.0 1112.0C313.3 1124.8 311.7 1145.3 311.0 1152.0" fill="none" stroke="#ecbb80" stroke-width="3.2" stroke-linecap="round"/><path d="M515.0 530.0C513.3 533.3 509.2 539.8 505.0 550.0C500.8 560.2 495.7 579.0 490.0 591.0C484.3 603.0 478.3 612.7 471.0 622.0C463.7 631.3 453.2 635.7 446.0 647.0C438.8 658.3 432.3 673.3 428.0 690.0C423.7 706.7 423.8 730.7 420.0 747.0C416.2 763.3 409.5 779.2 405.0 788.0C400.5 796.8 399.7 791.3 393.0 800.0C386.3 808.7 370.7 827.0 365.0 840.0C359.3 853.0 361.7 863.8 359.0 878.0C356.3 892.2 352.7 908.8 349.0 925.0C345.3 941.2 340.7 959.3 337.0 975.0C333.3 990.7 329.7 1002.3 327.0 1019.0C324.3 1035.7 323.0 1059.5 321.0 1075.0C319.0 1090.5 316.7 1099.2 315.0 1112.0C313.3 1124.8 311.7 1145.3 311.0 1152.0" fill="none" stroke="#f9cf98" stroke-width="2" stroke-linecap="round"/><path d="M505.0 382.0C500.5 389.7 486.3 413.5 478.0 428.0C469.7 442.5 463.5 453.3 455.0 469.0C446.5 484.7 435.2 504.8 427.0 522.0C418.8 539.2 414.3 551.7 406.0 572.0C397.7 592.3 387.0 619.0 377.0 644.0C367.0 669.0 356.3 696.0 346.0 722.0C335.7 748.0 322.7 778.7 315.0 800.0C307.3 821.3 304.8 825.0 300.0 850.0C295.2 875.0 289.5 921.7 286.0 950.0C282.5 978.3 282.5 999.7 279.0 1020.0C275.5 1040.3 270.5 1056.7 265.0 1072.0C259.5 1087.3 251.2 1098.7 246.0 1112.0C240.8 1125.3 236.0 1145.3 234.0 1152.0" fill="none" stroke="#dc6080" stroke-width="4.0" stroke-linecap="round"/><path d="M505.0 382.0C500.5 389.7 486.3 413.5 478.0 428.0C469.7 442.5 463.5 453.3 455.0 469.0C446.5 484.7 435.2 504.8 427.0 522.0C418.8 539.2 414.3 551.7 406.0 572.0C397.7 592.3 387.0 619.0 377.0 644.0C367.0 669.0 356.3 696.0 346.0 722.0C335.7 748.0 322.7 778.7 315.0 800.0C307.3 821.3 304.8 825.0 300.0 850.0C295.2 875.0 289.5 921.7 286.0 950.0C282.5 978.3 282.5 999.7 279.0 1020.0C275.5 1040.3 270.5 1056.7 265.0 1072.0C259.5 1087.3 251.2 1098.7 246.0 1112.0C240.8 1125.3 236.0 1145.3 234.0 1152.0" fill="none" stroke="#e8748f" stroke-width="2.8" stroke-linecap="round"/><path d="M205 804h7" stroke="#4aa0f0" stroke-width="1.2"/><path d="M202 802h7" stroke="#4aa0f0" stroke-width="1.2"/><path d="M233 828h9" stroke="#4aa0f0" stroke-width="1.2"/><path d="M205 819h6" stroke="#4aa0f0" stroke-width="1.2"/><path d="M203 804h6" stroke="#4aa0f0" stroke-width="1.2"/><path d="M233 829h9" stroke="#4aa0f0" stroke-width="1.2"/><path d="M228 807h7" stroke="#4aa0f0" stroke-width="1.2"/><path d="M221 826h9" stroke="#4aa0f0" stroke-width="1.2"/><path d="M443 803h8" stroke="#4aa0f0" stroke-width="1.2"/><path d="M432 815h6" stroke="#4aa0f0" stroke-width="1.2"/><path d="M421 803h10" stroke="#4aa0f0" stroke-width="1.2"/><path d="M443 816h7" stroke="#4aa0f0" stroke-width="1.2"/><path d="M445 817h9" stroke="#4aa0f0" stroke-width="1.2"/><path d="M442 815h7" stroke="#4aa0f0" stroke-width="1.2"/><path d="M428 813h6" stroke="#4aa0f0" stroke-width="1.2"/><path d="M412 824h5" stroke="#4aa0f0" stroke-width="1.2"/><path d="M398 819h6" stroke="#4aa0f0" stroke-width="1.2"/><path d="M424 814h7" stroke="#4aa0f0" stroke-width="1.2"/><path d="M420 852h7" stroke="#4aa0f0" stroke-width="1.2"/><path d="M382 878h6" stroke="#4aa0f0" stroke-width="1.2"/><path d="M389 885h7" stroke="#4aa0f0" stroke-width="1.2"/><path d="M399 894h6" stroke="#4aa0f0" stroke-width="1.2"/><path d="M375 854h9" stroke="#4aa0f0" stroke-width="1.2"/><path d="M402 854h7" stroke="#4aa0f0" stroke-width="1.2"/><path d="M381 868h5" stroke="#4aa0f0" stroke-width="1.2"/><path d="M405 894h10" stroke="#4aa0f0" stroke-width="1.2"/><path d="M407 898h5" stroke="#4aa0f0" stroke-width="1.2"/><path d="M386 898h9" stroke="#4aa0f0" stroke-width="1.2"/><path d="M392 897h8" stroke="#4aa0f0" stroke-width="1.2"/><path d="M411 858h6" stroke="#4aa0f0" stroke-width="1.2"/><path d="M393 848h7" stroke="#4aa0f0" stroke-width="1.2"/><path d="M418 860h5" stroke="#4aa0f0" stroke-width="1.2"/><path d="M347 952h9" stroke="#4aa0f0" stroke-width="1.2"/><path d="M358 960h5" stroke="#4aa0f0" stroke-width="1.2"/><path d="M379 970h6" stroke="#4aa0f0" stroke-width="1.2"/><path d="M347 944h6" stroke="#4aa0f0" stroke-width="1.2"/><path d="M369 950h5" stroke="#4aa0f0" stroke-width="1.2"/><path d="M362 957h10" stroke="#4aa0f0" stroke-width="1.2"/><path d="M349 977h9" stroke="#4aa0f0" stroke-width="1.2"/><path d="M359 1009h7" stroke="#4aa0f0" stroke-width="1.2"/><path d="M353 969h5" stroke="#4aa0f0" stroke-width="1.2"/><path d="M360 957h9" stroke="#4aa0f0" stroke-width="1.2"/><path d="M342 1035h5" stroke="#4aa0f0" stroke-width="1.2"/><path d="M334 1027h6" stroke="#4aa0f0" stroke-width="1.2"/><path d="M333 1046h6" stroke="#4aa0f0" stroke-width="1.2"/><path d="M193 927h8" stroke="#4aa0f0" stroke-width="1.2"/><path d="M199 909h10" stroke="#4aa0f0" stroke-width="1.2"/><path d="M338 690.1L344.5 700.5H331.5Z" fill="#c77f3f"/><path d="M393 766.1L399.5 776.5H386.5Z" fill="#c77f3f"/><path d="M237 1114.2L243.5 1124.5H230.5Z" fill="#c77f3f"/><path d="M310 1108.2L316.5 1118.5H303.5Z" fill="#c77f3f"/><path d="M327 1114.2L333.5 1124.5H320.5Z" fill="#c77f3f"/><path d="M220 1131.2L226.5 1141.5H213.5Z" fill="#c77f3f"/><path d="M268 1133.2L274.5 1143.5H261.5Z" fill="#c77f3f"/><path d="M193 341.1L199.5 351.6H186.5Z" fill="#c77f3f"/><circle cx="427" cy="980" r="2.3" fill="#f4f4f4"/><path d="M1180.0 418.0C1176.3 422.8 1165.3 438.5 1158.0 447.0C1150.7 455.5 1142.7 461.2 1136.0 469.0C1129.3 476.8 1124.2 484.0 1118.0 494.0C1111.8 504.0 1106.3 518.5 1099.0 529.0C1091.7 539.5 1082.8 547.7 1074.0 557.0C1065.2 566.3 1056.5 576.7 1046.0 585.0C1035.5 593.3 1020.5 601.8 1011.0 607.0C1001.5 612.2 994.7 610.8 989.0 616.0C983.3 621.2 982.2 630.2 977.0 638.0C971.8 645.8 964.2 654.3 958.0 663.0C951.8 671.7 943.0 685.5 940.0 690.0" fill="none" stroke="#b992d2" stroke-width="4" stroke-dasharray="6 7"/><path d="M752.0 910.0C746.7 912.0 731.0 918.0 720.0 922.0C709.0 926.0 706.0 921.0 686.0 934.0C666.0 947.0 624.3 974.0 600.0 1000.0C575.7 1026.0 551.0 1070.8 540.0 1090.0C529.0 1109.2 533.8 1104.7 534.0 1115.0C534.2 1125.3 539.8 1145.8 541.0 1152.0" fill="none" stroke="#b992d2" stroke-width="4" stroke-dasharray="6 7"/><path d="M1124 297L1180 336" stroke="#b992d2" stroke-width="3" stroke-dasharray="12 5 3 5" fill="none"/><rect x="288.5" y="311.5" width="75" height="27" rx="3" fill="#f6e3cf" stroke="#e3c3a0" stroke-width="1.2"/><text x="326.0" y="330.6" text-anchor="middle" font-size="15.5" fill="#4d3a22" font-family="DejaVu Sans,Liberation Sans,sans-serif">ME 111</text><rect x="206.5" y="775.5" width="75" height="27" rx="3" fill="#f6e3cf" stroke="#e3c3a0" stroke-width="1.2"/><text x="244.0" y="794.6" text-anchor="middle" font-size="15.5" fill="#4d3a22" font-family="DejaVu Sans,Liberation Sans,sans-serif">ME 109</text><rect x="396.5" y="525.5" width="52" height="27" rx="3" fill="#f6d6dc" stroke="#dfa3b4" stroke-width="1.2"/><text x="422.5" y="544.6" text-anchor="middle" font-size="15.5" fill="#6b2338" font-family="DejaVu Sans,Liberation Sans,sans-serif">I 95</text><rect x="305.5" y="944.5" width="58" height="26" rx="3" fill="#f6e3cf" stroke="#e3c3a0" stroke-width="1.2"/><text x="334.5" y="963.1" text-anchor="middle" font-size="15.5" fill="#4d3a22" font-family="DejaVu Sans,Liberation Sans,sans-serif">US 1</text><text x="402" y="569" font-size="13.5" font-style="italic" fill="#a02838" font-family="DejaVu Sans,Liberation Sans,sans-serif">25</text><text x="299" y="833" font-size="13.5" font-style="italic" fill="#a02838" font-family="DejaVu Sans,Liberation Sans,sans-serif">19</text><text x="404" y="642" font-size="16.800" fill="#3a3a3a" stroke="#f7f4ee" stroke-width="2.5" paint-order="stroke" font-family="DejaVu Sans,Liberation Sans,sans-serif">Kennebunk</text><text x="345" y="843" font-size="16.5" fill="#444" stroke="#f7f4ee" stroke-width="2.5" paint-order="stroke" font-family="DejaVu Sans,Liberation Sans,sans-serif">Wells</text><text x="476" y="492" font-size="14" font-style="italic" fill="#6c59c6" font-family="DejaVu Sans,Liberation Sans,sans-serif">Cape</text><text x="492" y="511" font-size="14" font-style="italic" fill="#6c59c6" font-family="DejaVu Sans,Liberation Sans,sans-serif">Co</text><defs>
<filter id="nz" color-interpolation-filters="sRGB" x="0" y="0" width="100%" height="100%"><feTurbulence type="fractalNoise" baseFrequency="0.09 0.11" numOctaves="3" seed="7" result="t"/>
<feColorMatrix in="t" type="matrix" values="0.4 0 0 0 0.04  0.4 0 0 0 0.165  0.32 0 0 0 0.125  0 0 0 0 1"/><feComposite operator="in" in2="SourceGraphic"/></filter>
<filter id="nz2" color-interpolation-filters="sRGB" x="0" y="0" width="100%" height="100%"><feTurbulence type="fractalNoise" baseFrequency="0.3" numOctaves="2" seed="3"/>
<feColorMatrix type="matrix" values="0 0 0 0 0.8  0 0 0 0 0.84  0 0 0 0 0.74  3 0 0 0 -1.85"/><feComposite operator="in" in2="SourceGraphic"/></filter>
<filter id="nz3" color-interpolation-filters="sRGB" x="0" y="0" width="100%" height="100%"><feTurbulence type="fractalNoise" baseFrequency="0.35" numOctaves="2" seed="11"/>
<feColorMatrix type="matrix" values="0 0 0 0 0.86  0 0 0 0 0.87  0 0 0 0 0.84  4 0 0 0 -1.9"/><feComposite operator="in" in2="SourceGraphic"/></filter><clipPath id="imgclip"><path d="M431 114H1117V300H736V390H431Z"/><polygon points="502.5,208.0 672.5,208.0 686.5,1109.0 516.5,1109.0"/><polygon points="637.0,160.0 808.0,160.0 819.6,911.0 648.6,911.0"/><polygon points="773.5,160.0 945.5,160.0 957.1,906.0 785.1,906.0"/></clipPath>
<clipPath id="topclip"><path d="M431 114H1117V300H736V390H431Z"/></clipPath>
<clipPath id="cR1"><polygon points="502.5,208.0 672.5,208.0 686.5,1109.0 516.5,1109.0"/></clipPath><clipPath id="cR2"><polygon points="637.0,160.0 808.0,160.0 819.6,911.0 648.6,911.0"/></clipPath><clipPath id="cR3"><polygon points="773.5,160.0 945.5,160.0 957.1,906.0 785.1,906.0"/></clipPath><clipPath id="redclip"><polygon points="502.5,208.0 672.5,208.0 686.5,1109.0 516.5,1109.0"/><polygon points="637.0,160.0 808.0,160.0 819.6,911.0 648.6,911.0"/><polygon points="773.5,160.0 945.5,160.0 957.1,906.0 785.1,906.0"/></clipPath>
<filter id="bl" x="-5%" y="-5%" width="110%" height="110%"><feGaussianBlur stdDeviation="4"/></filter><linearGradient id="glR3" gradientUnits="userSpaceOnUse" x1="905" y1="0" x2="957" y2="0"><stop offset="0" stop-color="#9db2b8" stop-opacity="0"/><stop offset=".55" stop-color="#9db2b8" stop-opacity=".55"/><stop offset="1" stop-color="#a9bcc0" stop-opacity=".95"/></linearGradient>
<linearGradient id="glR2" gradientUnits="userSpaceOnUse" x1="778" y1="0" x2="818" y2="0"><stop offset="0" stop-color="#9db2b8" stop-opacity="0"/><stop offset=".5" stop-color="#9db2b8" stop-opacity=".7"/><stop offset="1" stop-color="#a9bcc0" stop-opacity=".95"/></linearGradient>
<linearGradient id="glR1" gradientUnits="userSpaceOnUse" x1="646" y1="0" x2="686" y2="0"><stop offset="0" stop-color="#9db2b8" stop-opacity="0"/><stop offset=".55" stop-color="#9db2b8" stop-opacity=".65"/><stop offset="1" stop-color="#b0c0c2" stop-opacity=".95"/></linearGradient>
<linearGradient id="glT" gradientUnits="userSpaceOnUse" x1="0" y1="150" x2="0" y2="300"><stop offset="0" stop-color="#3c5560"/><stop offset="1" stop-color="#5e7a84"/></linearGradient>
</defs><g clip-path="url(#imgclip)"><rect x="425" y="110" width="700" height="1010" fill="#3d5e48"/><rect x="425" y="110" width="700" height="1010" filter="url(#nz)" opacity="1"/><rect x="425" y="110" width="700" height="1010" filter="url(#nz2)" opacity=".4"/><g clip-path="url(#topclip)"><path d="M1014 114 L1005 126 L960 135 L911 146 L880 172 L861 201 L846 235 L833 272 L830 310 L833 344 L842 379 L860 400 L880 412 L900 418 L960 418 L960 445 L950 445 L900 458 L874 465 L849 500 L827 529 L820 563 L817 579 L790 583 L774 585 L742 600 L733 622 L736 647 L752 675 L755 704 L740 718 L727 725 L690 738 L650 745 L605 754 L560 762 L512 768 L495 772 L495 1200 L1200 1200 L1200 100Z" fill="url(#glT)"/><path d="M990 232Q1000 224 1010 230Q1014 242 1004 250Q992 254 990 244Z M1028 180l6 3l-3 5z" fill="#5a7048"/></g><g clip-path="url(#redclip)"><g clip-path="url(#cR3)"><path d="M1014 114 L1005 126 L960 135 L911 146 L880 172 L861 201 L846 235 L833 272 L830 310 L833 344 L842 379 L860 400 L880 412 L900 418 L960 418 L960 445 L950 445 L900 458 L874 465 L849 500 L827 529 L820 563 L817 579 L790 583 L774 585 L742 600 L733 622 L736 647 L752 675 L755 704 L740 718 L727 725 L690 738 L650 745 L605 754 L560 762 L512 768 L495 772 L495 1200 L1200 1200 L1200 100Z" fill="#324a80"/><polygon points="773.5,160.0 945.5,160.0 957.1,906.0 785.1,906.0" fill="url(#glR3)"/></g><g clip-path="url(#cR1)"><path d="M1014 114 L1005 126 L960 135 L911 146 L880 172 L861 201 L846 235 L833 272 L830 310 L833 344 L842 379 L860 400 L880 412 L900 418 L960 418 L960 445 L950 445 L900 458 L874 465 L849 500 L827 529 L820 563 L817 579 L790 583 L774 585 L742 600 L733 622 L736 647 L752 675 L755 704 L740 718 L727 725 L690 738 L650 745 L605 754 L560 762 L512 768 L495 772 L495 1200 L1200 1200 L1200 100Z" fill="#324a80"/><polygon points="502.5,208.0 672.5,208.0 686.5,1109.0 516.5,1109.0" fill="url(#glR1)"/></g><g clip-path="url(#cR2)"><path d="M1014 114 L1005 126 L960 135 L911 146 L880 172 L861 201 L846 235 L833 272 L830 310 L833 344 L842 379 L860 400 L880 412 L900 418 L960 418 L960 445 L950 445 L900 458 L874 465 L849 500 L827 529 L820 563 L817 579 L790 583 L774 585 L742 600 L733 622 L736 647 L752 675 L755 704 L740 718 L727 725 L690 738 L650 745 L605 754 L560 762 L512 768 L495 772 L495 1200 L1200 1200 L1200 100Z" fill="#324a80"/><polygon points="637.0,160.0 808.0,160.0 819.6,911.0 648.6,911.0" fill="url(#glR2)"/></g></g><g clip-path="url(#redclip)"><path d="M1014 114 L1005 126 L960 135 L911 146 L880 172 L861 201 L846 235 L833 272 L830 310 L833 344 L842 379 L860 400 L880 412 L900 418 L960 418 L960 445 L950 445 L900 458 L874 465 L849 500 L827 529 L820 563 L817 579 L790 583 L774 585 L742 600 L733 622 L736 647 L752 675 L755 704 L740 718 L727 725 L690 738 L650 745 L605 754 L560 762 L512 768 L495 772" fill="none" stroke="#5f8fa6" stroke-width="16" opacity=".55" filter="url(#bl)"/></g><g clip-path="url(#redclip)"><path d="M1014 114 L1005 126 L960 135 L911 146 L880 172 L861 201 L846 235 L833 272 L830 310 L833 344 L842 379 L860 400 L880 412 L900 418 L960 418 L960 445 L950 445 L900 458 L874 465 L849 500 L827 529 L820 563 L817 579 L790 583 L774 585 L742 600 L733 622 L736 647 L752 675 L755 704 L740 718 L727 725 L690 738 L650 745 L605 754 L560 762 L512 768 L495 772 L495 100Z" fill="#3d5e48"/><path d="M1014 114 L1005 126 L960 135 L911 146 L880 172 L861 201 L846 235 L833 272 L830 310 L833 344 L842 379 L860 400 L880 412 L900 418 L960 418 L960 445 L950 445 L900 458 L874 465 L849 500 L827 529 L820 563 L817 579 L790 583 L774 585 L742 600 L733 622 L736 647 L752 675 L755 704 L740 718 L727 725 L690 738 L650 745 L605 754 L560 762 L512 768 L495 772 L495 100Z" filter="url(#nz)" opacity="1"/><path d="M1014 114 L1005 126 L960 135 L911 146 L880 172 L861 201 L846 235 L833 272 L830 310 L833 344 L842 379 L860 400 L880 412 L900 418 L960 418 L960 445 L950 445 L900 458 L874 465 L849 500 L827 529 L820 563 L817 579 L790 583 L774 585 L742 600 L733 622 L736 647 L752 675 L755 704 L740 718 L727 725 L690 738 L650 745 L605 754 L560 762 L512 768 L495 772 L495 100Z" filter="url(#nz2)" opacity=".4"/><path d="M1014 114 L1005 126 L960 135 L911 146 L880 172 L861 201 L846 235 L833 272 L830 310 L833 344 L842 379 L860 400 L880 412 L900 418 L960 418 L960 445 L950 445 L900 458 L874 465 L849 500 L827 529 L820 563 L817 579 L790 583 L774 585 L742 600 L733 622 L736 647 L752 675 L755 704 L740 718 L727 725 L690 738 L650 745 L605 754 L560 762 L512 768 L495 772" fill="none" stroke="#d4d2c2" stroke-width="2.2" opacity=".8"/></g><g clip-path="url(#topclip)"><path d="M431 114H1014L960 135L911 146L880 172L861 201L846 235L833 272L830 310V392H431Z" fill="#7d9263" opacity=".28"/><path d="M474 114Q480 135 492 150T512 185T536 215T548 240" fill="none" stroke="#27352f" stroke-width="3" opacity=".8"/></g><ellipse cx="550.0" cy="345.0" rx="35.0" ry="20.0" filter="url(#nz3)" opacity="0.8"/><ellipse cx="620.0" cy="357.5" rx="35.0" ry="22.5" filter="url(#nz3)" opacity="0.75"/><ellipse cx="665.0" cy="385.0" rx="25.0" ry="15.0" filter="url(#nz3)" opacity="0.6"/><ellipse cx="590.0" cy="710.0" rx="30.0" ry="20.0" filter="url(#nz3)" opacity="0.5"/><ellipse cx="720.0" cy="405.0" rx="20.0" ry="25.0" filter="url(#nz3)" opacity="0.5"/><ellipse cx="910.0" cy="435.0" rx="30.0" ry="15.0" filter="url(#nz3)" opacity="0.6"/></g><path d="M426.500 113V402.500H1118.500V113" stroke="#3c3c3c" stroke-width="1.300" fill="none"/><path d="M501.500 157V1123.500H957.500V157Z" stroke="#3c3c3c" stroke-width="1.300" fill="none"/><path d="M431.1 160.5L603.1 161.1M431.2 167.5L603.2 168.1M431.3 174.5L603.3 175.1M431.4 181.5L603.4 182.1M431.5 188.5L603.5 189.1M431.6 195.5L603.6 196.1M431.7 202.5L603.7 203.1M431.8 209.5L603.8 210.1M431.9 216.5L603.9 217.1M432.0 223.5L604.0 224.1M432.2 230.5L604.2 231.1M432.3 237.5L604.3 238.1M432.4 244.5L604.4 245.1M432.5 251.5L604.5 252.1M432.6 258.5L604.6 259.1M432.7 265.5L604.7 266.1M432.8 272.5L604.8 273.1M432.9 279.5L604.9 280.1M433.0 286.5L605.0 287.1M433.1 293.5L605.1 294.1M433.2 300.5L605.2 301.1M433.3 307.5L605.3 308.1M433.5 314.5L605.5 315.1M433.6 321.5L605.6 322.1M433.7 328.5L605.7 329.1M433.8 335.5L605.8 336.1M433.9 342.5L605.9 343.1M434.0 349.5L606.0 350.1M434.1 356.5L606.1 357.1M434.2 363.5L606.2 364.1M434.3 370.5L606.3 371.1M434.4 377.5L606.4 378.1M434.5 384.5L606.5 385.1M434.7 391.5L606.7 392.1M434.8 398.5L606.8 399.1" stroke="#08f2f6" stroke-width="3" fill="none"/><path d="M431.0 156.0 L603.0 156.0 L606.8 402.0 L434.8 402.0Z" stroke="#08f2f6" stroke-width="1.6" fill="none"/><path d="M560.0 157.2L734.0 157.8M560.1 164.2L734.1 164.8M560.2 171.2L734.2 171.8M560.3 178.2L734.3 178.8M560.5 185.2L734.5 185.8M560.6 192.2L734.6 192.8M560.7 199.2L734.7 199.8M560.8 206.2L734.8 206.8M560.9 213.2L734.9 213.8M561.0 220.2L735.0 220.8M561.1 227.2L735.1 227.8M561.2 234.2L735.2 234.8M561.3 241.2L735.3 241.8M561.4 248.2L735.4 248.8M561.5 255.2L735.5 255.8M561.6 262.2L735.6 262.8M561.8 269.2L735.8 269.8M561.9 276.2L735.9 276.8M562.0 283.2L736.0 283.8M562.1 290.2L736.1 290.8M562.2 297.2L736.2 297.8M562.3 304.2L736.3 304.8M562.4 311.2L736.4 311.8M562.5 318.2L736.5 318.8M562.6 325.2L736.6 325.8M562.7 332.2L736.7 332.8M562.8 339.2L736.8 339.8M562.9 346.2L736.9 346.8M563.1 353.2L737.1 353.8M563.2 360.2L737.2 360.8M563.3 367.2L737.3 367.8M563.4 374.2L737.4 374.8M563.5 381.2L737.5 381.8M563.6 388.2L737.6 388.8M563.7 395.2L737.7 395.8" stroke="#08f2f6" stroke-width="2.1" fill="none"/><path d="M560.0 156.0 L734.0 156.0 L737.8 402.0 L563.8 402.0Z" stroke="#08f2f6" stroke-width="1.6" fill="none"/><path d="M687.1 160.5L858.1 161.1M687.2 167.5L858.2 168.1M687.3 174.5L858.3 175.1M687.4 181.5L858.4 182.1M687.5 188.5L858.5 189.1M687.6 195.5L858.6 196.1M687.7 202.5L858.7 203.1M687.8 209.5L858.8 210.1M687.9 216.5L858.9 217.1M688.0 223.5L859.0 224.1M688.2 230.5L859.2 231.1M688.3 237.5L859.3 238.1M688.4 244.5L859.4 245.1M688.5 251.5L859.5 252.1M688.6 258.5L859.6 259.1M688.7 265.5L859.7 266.1M688.8 272.5L859.8 273.1M688.9 279.5L859.9 280.1M689.0 286.5L860.0 287.1M689.1 293.5L860.1 294.1M689.2 300.5L860.2 301.1M689.3 307.5L860.3 308.1" stroke="#08f2f6" stroke-width="3" fill="none"/><path d="M687.0 156.0 L858.0 156.0 L860.4 313.0 L689.4 313.0Z" stroke="#08f2f6" stroke-width="1.6" fill="none"/><path d="M687.1 317.5L734.1 318.1M687.2 324.5L734.2 325.1M687.3 331.5L734.3 332.1M687.4 338.5L734.4 339.1M687.5 345.5L734.5 346.1M687.6 352.5L734.6 353.1M687.7 359.5L734.7 360.1M687.8 366.5L734.8 367.1M687.9 373.5L734.9 374.1M688.0 380.5L735.0 381.1M688.2 387.5L735.2 388.1M688.3 394.5L735.3 395.1" stroke="#08f2f6" stroke-width="3" fill="none"/><path d="M687.0 313.0 L734.0 313.0 L735.3 397.0 L688.3 397.0Z" stroke="#08f2f6" stroke-width="1.6" fill="none"/><path d="M945.0 157.2L985.0 157.8M945.1 164.2L985.1 164.8M945.2 171.2L985.2 171.8M945.3 178.2L985.3 178.8M945.5 185.2L985.5 185.8M945.6 192.2L985.6 192.8M945.7 199.2L985.7 199.8M945.8 206.2L985.8 206.8M945.9 213.2L985.9 213.8M946.0 220.2L986.0 220.8M946.1 227.2L986.1 227.8M946.2 234.2L986.2 234.8M946.3 241.2L986.3 241.8M946.4 248.2L986.4 248.8M946.5 255.2L986.5 255.8M946.6 262.2L986.6 262.8M946.8 269.2L986.8 269.8M946.9 276.2L986.9 276.8M947.0 283.2L987.0 283.8M947.1 290.2L987.1 290.8M947.2 297.2L987.2 297.8M947.3 304.2L987.3 304.8M947.4 311.2L987.4 311.8" stroke="#08f2f6" stroke-width="2.1" fill="none"/><path d="M945.0 156.0 L985.0 156.0 L987.4 313.0 L947.4 313.0Z" stroke="#08f2f6" stroke-width="1.6" fill="none"/><path d="M946.1 122.5L1117.1 123.1M946.2 129.5L1117.2 130.1M946.3 136.5L1117.3 137.1M946.4 143.5L1117.4 144.1M946.5 150.5L1117.5 151.1M946.6 157.5L1117.6 158.1M946.7 164.5L1117.7 165.1M946.8 171.5L1117.8 172.1M946.9 178.5L1117.9 179.1M947.0 185.5L1118.0 186.1M947.2 192.5L1118.2 193.1M947.3 199.5L1118.3 200.1M947.4 206.5L1118.4 207.1M947.5 213.5L1118.5 214.1M947.6 220.5L1118.6 221.1M947.7 227.5L1118.7 228.1M947.8 234.5L1118.8 235.1M947.9 241.5L1118.9 242.1M948.0 248.5L1119.0 249.1M948.1 255.5L1119.1 256.1M948.2 262.5L1119.2 263.1M948.3 269.5L1119.3 270.1M948.5 276.5L1119.5 277.1M948.6 283.5L1119.6 284.1M948.7 290.5L1119.7 291.1M948.8 297.5L1119.8 298.1M948.9 304.5L1119.9 305.1M949.0 311.5L1120.0 312.1" stroke="#08f2f6" stroke-width="2.4" fill="none"/><path d="M946.0 118.0 L1117.0 118.0 L1120.0 313.0 L949.0 313.0Z" stroke="#08f2f6" stroke-width="1.6" fill="none"/><path d="M431.0 114.5L603.0 115.0M431.1 121.5L603.1 122.0M431.2 128.5L603.2 129.0M431.3 135.5L603.3 136.0M431.4 142.5L603.4 143.0M431.5 149.5L603.5 150.0" stroke="#0a10e0" stroke-width="1.4" fill="none"/><path d="M431.0 114.5 L603.0 114.5 L603.6 156.0 L431.6 156.0Z" stroke="#0a10e0" stroke-width="1.8" fill="none"/><path d="M433.1 119.6L601.1 120.1M433.2 126.6L601.2 127.1M433.3 133.6L601.3 134.1M433.4 140.6L601.4 141.1M433.5 147.6L601.5 148.1" stroke="#08f2f6" stroke-width="1.2" fill="none"/><path d="M687.0 114.5L858.0 115.0M687.1 121.5L858.1 122.0M687.2 128.5L858.2 129.0M687.3 135.5L858.3 136.0M687.4 142.5L858.4 143.0M687.5 149.5L858.5 150.0" stroke="#0a10e0" stroke-width="1.4" fill="none"/><path d="M687.0 114.5 L858.0 114.5 L858.6 154.0 L687.6 154.0Z" stroke="#0a10e0" stroke-width="1.8" fill="none"/><path d="M689.1 119.6L856.1 120.1M689.2 126.6L856.2 127.1M689.3 133.6L856.3 134.1M689.4 140.6L856.4 141.1M689.5 147.6L856.5 148.1" stroke="#08f2f6" stroke-width="1.2" fill="none"/><path d="M858.0 114.5L985.0 115.0M858.1 121.5L985.1 122.0M858.2 128.5L985.2 129.0M858.3 135.5L985.3 136.0M858.4 142.5L985.4 143.0M858.5 149.5L985.5 150.0" stroke="#0a10e0" stroke-width="1.4" fill="none"/><path d="M858.0 114.5 L985.0 114.5 L985.6 153.0 L858.6 153.0Z" stroke="#0a10e0" stroke-width="1.8" fill="none"/><path d="M860.1 119.6L983.1 120.1M860.2 126.6L983.2 127.1M860.3 133.6L983.3 134.1M860.4 140.6L983.4 141.1M860.5 147.6L983.5 148.1" stroke="#08f2f6" stroke-width="1.2" fill="none"/><path d="M603 114.8H1118M1117.5 114V124" stroke="#0a10e0" stroke-width="2.2" fill="none"/><path d="M603 121.600H687M603 128.600H687M603 135.600H687M603 142.600H687M603 149.700H687" stroke="#08f2f6" stroke-width="1.800" fill="none"/><path d="M845 114Q852 130 850 150T852 175M968 114Q972 150 969 200T970 296" stroke="#20d820" stroke-width="1.1" stroke-dasharray="4 3" fill="none"/><path d="M434 391H503" stroke="#30c030" stroke-width="1.3"/><path d="M502.5 208.0L672.5 207.0M502.6 214.9L672.6 213.9M502.7 221.8L672.7 220.8M502.8 228.7L672.8 227.7M502.9 235.6L672.9 234.6M503.0 242.5L673.0 241.5M503.1 249.4L673.1 248.4M503.2 256.3L673.2 255.3M503.4 263.2L673.4 262.2M503.5 270.1L673.5 269.1M503.6 277.0L673.6 276.0M503.7 283.9L673.7 282.9M503.8 290.8L673.8 289.8M503.9 297.7L673.9 296.7M504.0 304.6L674.0 303.6M504.1 311.5L674.1 310.5M504.2 318.4L674.2 317.4M504.3 325.3L674.3 324.3M504.4 332.2L674.4 331.2M504.5 339.1L674.5 338.1M504.6 346.0L674.6 345.0M504.7 352.9L674.7 351.9M504.9 359.8L674.9 358.8M505.0 366.7L675.0 365.7M505.1 373.6L675.1 372.6M505.2 380.5L675.2 379.5M505.3 387.4L675.3 386.4M505.4 394.3L675.4 393.3M505.5 401.2L675.5 400.2M505.6 408.1L675.6 407.1M505.7 415.0L675.7 414.0M505.8 421.9L675.8 420.9M505.9 428.8L675.9 427.8M506.0 435.7L676.0 434.7M506.1 442.6L676.1 441.6M506.2 449.5L676.2 448.5M506.4 456.4L676.4 455.4M506.5 463.3L676.5 462.3M506.6 470.2L676.6 469.2M506.7 477.1L676.7 476.1M506.8 484.0L676.8 483.0M506.9 490.9L676.9 489.9M507.0 497.8L677.0 496.8M507.1 504.7L677.1 503.7M507.2 511.6L677.2 510.6M507.3 518.5L677.3 517.5M507.4 525.4L677.4 524.4M507.5 532.3L677.5 531.3M507.6 539.2L677.6 538.2M507.7 546.1L677.7 545.1M507.8 553.0L677.8 552.0M508.0 559.9L678.0 558.9M508.1 566.8L678.1 565.8M508.2 573.7L678.2 572.7M508.3 580.6L678.3 579.6M508.4 587.5L678.4 586.5M508.5 594.4L678.5 593.4M508.6 601.3L678.6 600.3M508.7 608.2L678.7 607.2M508.8 615.1L678.8 614.1M508.9 622.0L678.9 621.0M509.0 628.9L679.0 627.9M509.1 635.8L679.1 634.8M509.2 642.7L679.2 641.7M509.3 649.6L679.3 648.6M509.5 656.5L679.5 655.5M509.6 663.4L679.6 662.4M509.7 670.3L679.7 669.3M509.8 677.2L679.8 676.2M509.9 684.1L679.9 683.1M510.0 691.0L680.0 690.0M510.1 697.9L680.1 696.9M510.2 704.8L680.2 703.8M510.3 711.7L680.3 710.7M510.4 718.6L680.4 717.6M510.5 725.5L680.5 724.5M510.6 732.4L680.6 731.4M510.7 739.3L680.7 738.3M510.8 746.2L680.8 745.2M510.9 753.1L680.9 752.1M511.1 760.0L681.1 759.0M511.2 766.9L681.2 765.9M511.3 773.8L681.3 772.8M511.4 780.7L681.4 779.7M511.5 787.6L681.5 786.6M511.6 794.5L681.6 793.5M511.7 801.4L681.7 800.4M511.8 808.3L681.8 807.3M511.9 815.2L681.9 814.2M512.0 822.1L682.0 821.1M512.1 829.0L682.1 828.0M512.2 835.9L682.2 834.9M512.3 842.8L682.3 841.8M512.4 849.7L682.4 848.7M512.6 856.6L682.6 855.6M512.7 863.5L682.7 862.5M512.8 870.4L682.8 869.4M512.9 877.3L682.9 876.3M513.0 884.2L683.0 883.2M513.1 891.1L683.1 890.1M513.2 898.0L683.2 897.0M513.3 904.9L683.3 903.9M513.4 911.8L683.4 910.8M513.5 918.7L683.5 917.7M513.6 925.6L683.6 924.6M513.7 932.5L683.7 931.5M513.8 939.4L683.8 938.4M513.9 946.3L683.9 945.3M514.1 953.2L684.1 952.2M514.2 960.1L684.2 959.1M514.3 967.0L684.3 966.0M514.4 973.9L684.4 972.9M514.5 980.8L684.5 979.8M514.6 987.7L684.6 986.7M514.7 994.6L684.7 993.6M514.8 1001.5L684.8 1000.5M514.9 1008.4L684.9 1007.4M515.0 1015.3L685.0 1014.3M515.1 1022.2L685.1 1021.2M515.2 1029.1L685.2 1028.1M515.3 1036.0L685.3 1035.0M515.4 1042.9L685.4 1041.9M515.5 1049.8L685.5 1048.8M515.7 1056.7L685.7 1055.7M515.8 1063.6L685.8 1062.6M515.9 1070.5L685.9 1069.5M516.0 1077.4L686.0 1076.4M516.1 1084.3L686.1 1083.3M516.2 1091.2L686.2 1090.2M516.3 1098.1L686.3 1097.1M516.4 1105.0L686.4 1104.0M516.5 1111.9L686.5 1110.9M516.6 1118.8L686.6 1117.8" stroke="#d8141c" stroke-width="1.4" fill="none"/><path d="M502.5 208.0 L672.5 208.0 L686.7 1122.0 L516.7 1122.0Z" stroke="#d8141c" stroke-width="1.4" fill="none"/><path d="M637.0 162.2L808.0 161.2M637.1 169.1L808.1 168.1M637.2 176.0L808.2 175.0M637.4 182.9L808.4 181.9M637.5 189.8L808.5 188.8M637.6 196.7L808.6 195.7M637.7 203.6L808.7 202.6M637.8 210.5L808.8 209.5M637.9 217.4L808.9 216.4M638.0 224.3L809.0 223.3M638.1 231.2L809.1 230.2M638.2 238.1L809.2 237.1M638.3 245.0L809.3 244.0M638.4 251.9L809.4 250.9M638.5 258.8L809.5 257.8M638.6 265.7L809.6 264.7M638.7 272.6L809.7 271.6M638.9 279.5L809.9 278.5M639.0 286.4L810.0 285.4M639.1 293.3L810.1 292.3M639.2 300.2L810.2 299.2M639.3 307.1L810.3 306.1M639.4 314.0L810.4 313.0M639.5 320.9L810.5 319.9M639.6 327.8L810.6 326.8M639.7 334.7L810.7 333.7M639.8 341.6L810.8 340.6M639.9 348.5L810.9 347.5M640.0 355.4L811.0 354.4M640.1 362.3L811.1 361.3M640.2 369.2L811.2 368.2M640.3 376.1L811.3 375.1M640.5 383.0L811.5 382.0M640.6 389.9L811.6 388.9M640.7 396.8L811.7 395.8M640.8 403.7L811.8 402.7M640.9 410.6L811.9 409.6M641.0 417.5L812.0 416.5M641.1 424.4L812.1 423.4M641.2 431.3L812.2 430.3M641.3 438.2L812.3 437.2M641.4 445.1L812.4 444.1M641.5 452.0L812.5 451.0M641.6 458.9L812.6 457.9M641.7 465.8L812.7 464.8M641.8 472.7L812.8 471.7M642.0 479.6L813.0 478.6M642.1 486.5L813.1 485.5M642.2 493.4L813.2 492.4M642.3 500.3L813.3 499.3M642.4 507.2L813.4 506.2M642.5 514.1L813.5 513.1M642.6 521.0L813.6 520.0M642.7 527.9L813.7 526.9M642.8 534.8L813.8 533.8M642.9 541.7L813.9 540.7M643.0 548.6L814.0 547.6M643.1 555.5L814.1 554.5M643.2 562.4L814.2 561.4M643.3 569.3L814.3 568.3M643.5 576.2L814.5 575.2M643.6 583.1L814.6 582.1M643.7 590.0L814.7 589.0M643.8 596.9L814.8 595.9M643.9 603.8L814.9 602.8M644.0 610.7L815.0 609.7M644.1 617.6L815.1 616.6M644.2 624.5L815.2 623.5M644.3 631.4L815.3 630.4M644.4 638.3L815.4 637.3M644.5 645.2L815.5 644.2M644.6 652.1L815.6 651.1M644.7 659.0L815.7 658.0M644.8 665.9L815.8 664.9M644.9 672.8L815.9 671.8M645.1 679.7L816.1 678.7M645.2 686.6L816.2 685.6M645.3 693.5L816.3 692.5M645.4 700.4L816.4 699.4M645.5 707.3L816.5 706.3M645.6 714.2L816.6 713.2M645.7 721.1L816.7 720.1M645.8 728.0L816.8 727.0M645.9 734.9L816.9 733.9M646.0 741.8L817.0 740.8M646.1 748.7L817.1 747.7M646.2 755.6L817.2 754.6M646.3 762.5L817.3 761.5M646.4 769.4L817.4 768.4M646.6 776.3L817.6 775.3M646.7 783.2L817.7 782.2M646.8 790.1L817.8 789.1M646.9 797.0L817.9 796.0M647.0 803.9L818.0 802.9M647.1 810.8L818.1 809.8M647.2 817.7L818.2 816.7M647.3 824.6L818.3 823.6M647.4 831.5L818.4 830.5M647.5 838.4L818.5 837.4M647.6 845.3L818.6 844.3M647.7 852.2L818.7 851.2M647.8 859.1L818.8 858.1M647.9 866.0L818.9 865.0M648.0 872.9L819.0 871.9M648.2 879.8L819.2 878.8M648.3 886.7L819.3 885.7M648.4 893.6L819.4 892.6M648.5 900.5L819.5 899.5M648.6 907.4L819.6 906.4M648.7 914.3L819.7 913.3M648.8 921.2L819.8 920.2" stroke="#d8141c" stroke-width="1.4" fill="none"/><path d="M637.0 160.0 L808.0 160.0 L819.8 922.0 L648.8 922.0Z" stroke="#d8141c" stroke-width="1.4" fill="none"/><path d="M773.6 164.4L945.6 163.4M773.7 171.3L945.7 170.3M773.8 178.2L945.8 177.2M773.9 185.1L945.9 184.1M774.0 192.0L946.0 191.0M774.1 198.9L946.1 197.9M774.2 205.8L946.2 204.8M774.3 212.7L946.3 211.7M774.4 219.6L946.4 218.6M774.5 226.5L946.5 225.5M774.6 233.4L946.6 232.4M774.7 240.3L946.7 239.3M774.9 247.2L946.9 246.2M775.0 254.1L947.0 253.1M775.1 261.0L947.1 260.0M775.2 267.9L947.2 266.9M775.3 274.8L947.3 273.8M775.4 281.7L947.4 280.7M775.5 288.6L947.5 287.6M775.6 295.5L947.6 294.5M775.7 302.4L947.7 301.4M775.8 309.3L947.8 308.3M775.9 316.2L947.9 315.2M776.0 323.1L948.0 322.1M776.1 330.0L948.1 329.0M776.2 336.9L948.2 335.9M776.3 343.8L948.3 342.8M776.5 350.7L948.5 349.7M776.6 357.6L948.6 356.6M776.7 364.5L948.7 363.5M776.8 371.4L948.8 370.4M776.9 378.3L948.9 377.3M777.0 385.2L949.0 384.2M777.1 392.1L949.1 391.1M777.2 399.0L949.2 398.0M777.3 405.9L949.3 404.9M777.4 412.8L949.4 411.8M777.5 419.7L949.5 418.7M777.6 426.6L949.6 425.6M777.7 433.5L949.7 432.5M777.8 440.4L949.8 439.4M778.0 447.3L950.0 446.3M778.1 454.2L950.1 453.2M778.2 461.1L950.2 460.1M778.3 468.0L950.3 467.0M778.4 474.9L950.4 473.9M778.5 481.8L950.5 480.8M778.6 488.7L950.6 487.7M778.7 495.6L950.7 494.6M778.8 502.5L950.8 501.5M778.9 509.4L950.9 508.4M779.0 516.3L951.0 515.3M779.1 523.2L951.1 522.2M779.2 530.1L951.2 529.1M779.3 537.0L951.3 536.0M779.5 543.9L951.5 542.9M779.6 550.8L951.6 549.8M779.7 557.7L951.7 556.7M779.8 564.6L951.8 563.6M779.9 571.5L951.9 570.5M780.0 578.4L952.0 577.4M780.1 585.3L952.1 584.3M780.2 592.2L952.2 591.2M780.3 599.1L952.3 598.1M780.4 606.0L952.4 605.0M780.5 612.9L952.5 611.9M780.6 619.8L952.6 618.8M780.7 626.7L952.7 625.7M780.8 633.6L952.8 632.6M780.9 640.5L952.9 639.5M781.1 647.4L953.1 646.4M781.2 654.3L953.2 653.3M781.3 661.2L953.3 660.2M781.4 668.1L953.4 667.1M781.5 675.0L953.5 674.0M781.6 681.9L953.6 680.9M781.7 688.8L953.7 687.8M781.8 695.7L953.8 694.7M781.9 702.6L953.9 701.6M782.0 709.5L954.0 708.5M782.1 716.4L954.1 715.4M782.2 723.3L954.2 722.3M782.3 730.2L954.3 729.2M782.4 737.1L954.4 736.1M782.6 744.0L954.6 743.0M782.7 750.9L954.7 749.9M782.8 757.8L954.8 756.8M782.9 764.7L954.9 763.7M783.0 771.6L955.0 770.6M783.1 778.5L955.1 777.5M783.2 785.4L955.2 784.4M783.3 792.3L955.3 791.3M783.4 799.2L955.4 798.2M783.5 806.1L955.5 805.1M783.6 813.0L955.6 812.0M783.7 819.9L955.7 818.9M783.8 826.8L955.8 825.8M783.9 833.7L955.9 832.7M784.0 840.6L956.0 839.6M784.2 847.5L956.2 846.5M784.3 854.4L956.3 853.4M784.4 861.3L956.4 860.3M784.5 868.2L956.5 867.2M784.6 875.1L956.6 874.1M784.7 882.0L956.7 881.0M784.8 888.9L956.8 887.9M784.9 895.8L956.9 894.8M785.0 902.7L957.0 901.7M785.1 909.6L957.1 908.6M785.2 916.5L957.2 915.5" stroke="#d8141c" stroke-width="1.4" fill="none"/><path d="M773.5 160.0 L945.5 160.0 L957.3 920.0 L785.3 920.0Z" stroke="#d8141c" stroke-width="1.4" fill="none"/><path d="M502.5 208.4L672.5 209.2M502.6 215.3L672.6 216.1M502.7 222.2L672.7 223.0M502.8 229.1L672.8 229.9M502.9 236.0L672.9 236.8M503.0 242.9L673.0 243.7M503.1 249.8L673.1 250.6M503.3 256.7L673.3 257.5M503.4 263.6L673.4 264.4M503.5 270.5L673.5 271.3M503.6 277.4L673.6 278.2M503.7 284.3L673.7 285.1M503.8 291.2L673.8 292.0M503.9 298.1L673.9 298.9M504.0 305.0L674.0 305.8M504.1 311.9L674.1 312.7M504.2 318.8L674.2 319.6M504.3 325.7L674.3 326.5M504.4 332.6L674.4 333.4M504.5 339.5L674.5 340.3M504.6 346.4L674.6 347.2M504.8 353.3L674.8 354.1M504.9 360.2L674.9 361.0M505.0 367.1L675.0 367.9M505.1 374.0L675.1 374.8M505.2 380.9L675.2 381.7M505.3 387.8L675.3 388.6M505.4 394.7L675.4 395.5M505.5 401.6L675.5 402.4M505.6 408.5L675.6 409.3M505.7 415.4L675.7 416.2M505.8 422.3L675.8 423.1M505.9 429.2L675.9 430.0M506.0 436.1L676.0 436.9M506.1 443.0L676.1 443.8M506.2 449.9L676.2 450.7M506.4 456.8L676.4 457.6M506.5 463.7L676.5 464.5M506.6 470.6L676.6 471.4M506.7 477.5L676.7 478.3M506.8 484.4L676.8 485.2M506.9 491.3L676.9 492.1M507.0 498.2L677.0 499.0M507.1 505.1L677.1 505.9M507.2 512.0L677.2 512.8M507.3 518.9L677.3 519.7M507.4 525.8L677.4 526.6M507.5 532.7L677.5 533.5M507.6 539.6L677.6 540.4M507.7 546.5L677.7 547.3M507.9 553.4L677.9 554.2M508.0 560.3L678.0 561.1M508.1 567.2L678.1 568.0M508.2 574.1L678.2 574.9M508.3 581.0L678.3 581.8M508.4 587.9L678.4 588.7M508.5 594.8L678.5 595.6M508.6 601.7L678.6 602.5M508.7 608.6L678.7 609.4M508.8 615.5L678.8 616.3M508.9 622.4L678.9 623.2M509.0 629.3L679.0 630.1M509.1 636.2L679.1 637.0M509.2 643.1L679.2 643.9M509.4 650.0L679.4 650.8M509.5 656.9L679.5 657.7M509.6 663.8L679.6 664.6M509.7 670.7L679.7 671.5M509.8 677.6L679.8 678.4M509.9 684.5L679.9 685.3M510.0 691.4L680.0 692.2M510.1 698.3L680.1 699.1M510.2 705.2L680.2 706.0M510.3 712.1L680.3 712.9M510.4 719.0L680.4 719.8M510.5 725.9L680.5 726.7M510.6 732.8L680.6 733.6M510.7 739.7L680.7 740.5M510.8 746.6L680.8 747.4M511.0 753.5L681.0 754.3M511.1 760.4L681.1 761.2M511.2 767.3L681.2 768.1M511.3 774.2L681.3 775.0M511.4 781.1L681.4 781.9M511.5 788.0L681.5 788.8M511.6 794.9L681.6 795.7M511.7 801.8L681.7 802.6M511.8 808.7L681.8 809.5M511.9 815.6L681.9 816.4M512.0 822.5L682.0 823.3M512.1 829.4L682.1 830.2M512.2 836.3L682.2 837.1M512.3 843.2L682.3 844.0M512.5 850.1L682.5 850.9M512.6 857.0L682.6 857.8M512.7 863.9L682.7 864.7M512.8 870.8L682.8 871.6M512.9 877.7L682.9 878.5M513.0 884.6L683.0 885.4M513.1 891.5L683.1 892.3M513.2 898.4L683.2 899.2M513.3 905.3L683.3 906.1M513.4 912.2L683.4 913.0M513.5 919.1L683.5 919.9M513.6 926.0L683.6 926.8M513.7 932.9L683.7 933.7M513.8 939.8L683.8 940.6M513.9 946.7L683.9 947.5M514.1 953.6L684.1 954.4M514.2 960.5L684.2 961.3M514.3 967.4L684.3 968.2M514.4 974.3L684.4 975.1M514.5 981.2L684.5 982.0M514.6 988.1L684.6 988.9M514.7 995.0L684.7 995.8M514.8 1001.9L684.8 1002.7M514.9 1008.8L684.9 1009.6M515.0 1015.7L685.0 1016.5M515.1 1022.6L685.1 1023.4M515.2 1029.5L685.2 1030.3M515.3 1036.4L685.3 1037.2M515.4 1043.3L685.4 1044.1M515.6 1050.2L685.6 1051.0M515.7 1057.1L685.7 1057.9M515.8 1064.0L685.8 1064.8M515.9 1070.9L685.9 1071.7M516.0 1077.8L686.0 1078.6M516.1 1084.7L686.1 1085.5M516.2 1091.6L686.2 1092.4M516.3 1098.5L686.3 1099.3M516.4 1105.4L686.4 1106.2M516.5 1112.3L686.5 1113.1M516.6 1119.2L686.6 1120.0" stroke="#d8141c" stroke-width=".8" fill="none" opacity=".75"/><path d="M637.0 162.6L808.0 163.4M637.1 169.5L808.1 170.3M637.3 176.4L808.3 177.2M637.4 183.3L808.4 184.1M637.5 190.2L808.5 191.0M637.6 197.1L808.6 197.9M637.7 204.0L808.7 204.8M637.8 210.9L808.8 211.7M637.9 217.8L808.9 218.6M638.0 224.7L809.0 225.5M638.1 231.6L809.1 232.4M638.2 238.5L809.2 239.3M638.3 245.4L809.3 246.2M638.4 252.3L809.4 253.1M638.5 259.2L809.5 260.0M638.6 266.1L809.6 266.9M638.8 273.0L809.8 273.8M638.9 279.9L809.9 280.7M639.0 286.8L810.0 287.6M639.1 293.7L810.1 294.5M639.2 300.6L810.2 301.4M639.3 307.5L810.3 308.3M639.4 314.4L810.4 315.2M639.5 321.3L810.5 322.1M639.6 328.2L810.6 329.0M639.7 335.1L810.7 335.9M639.8 342.0L810.8 342.8M639.9 348.9L810.9 349.7M640.0 355.8L811.0 356.6M640.1 362.7L811.1 363.5M640.2 369.6L811.2 370.4M640.4 376.5L811.4 377.3M640.5 383.4L811.5 384.2M640.6 390.3L811.6 391.1M640.7 397.2L811.7 398.0M640.8 404.1L811.8 404.9M640.9 411.0L811.9 411.8M641.0 417.9L812.0 418.7M641.1 424.8L812.1 425.6M641.2 431.7L812.2 432.5M641.3 438.6L812.3 439.4M641.4 445.5L812.4 446.3M641.5 452.4L812.5 453.2M641.6 459.3L812.6 460.1M641.7 466.2L812.7 467.0M641.9 473.1L812.9 473.9M642.0 480.0L813.0 480.8M642.1 486.9L813.1 487.7M642.2 493.8L813.2 494.6M642.3 500.7L813.3 501.5M642.4 507.6L813.4 508.4M642.5 514.5L813.5 515.3M642.6 521.4L813.6 522.2M642.7 528.3L813.7 529.1M642.8 535.2L813.8 536.0M642.9 542.1L813.9 542.9M643.0 549.0L814.0 549.8M643.1 555.9L814.1 556.7M643.2 562.8L814.2 563.6M643.4 569.7L814.4 570.5M643.5 576.6L814.5 577.4M643.6 583.5L814.6 584.3M643.7 590.4L814.7 591.2M643.8 597.3L814.8 598.1M643.9 604.2L814.9 605.0M644.0 611.1L815.0 611.9M644.1 618.0L815.1 618.8M644.2 624.9L815.2 625.7M644.3 631.8L815.3 632.6M644.4 638.7L815.4 639.5M644.5 645.6L815.5 646.4M644.6 652.5L815.6 653.3M644.7 659.4L815.7 660.2M644.8 666.3L815.8 667.1M645.0 673.2L816.0 674.0M645.1 680.1L816.1 680.9M645.2 687.0L816.2 687.8M645.3 693.9L816.3 694.7M645.4 700.8L816.4 701.6M645.5 707.7L816.5 708.5M645.6 714.6L816.6 715.4M645.7 721.5L816.7 722.3M645.8 728.4L816.8 729.2M645.9 735.3L816.9 736.1M646.0 742.2L817.0 743.0M646.1 749.1L817.1 749.9M646.2 756.0L817.2 756.8M646.3 762.9L817.3 763.7M646.5 769.8L817.5 770.6M646.6 776.7L817.6 777.5M646.7 783.6L817.7 784.4M646.8 790.5L817.8 791.3M646.9 797.4L817.9 798.2M647.0 804.3L818.0 805.1M647.1 811.2L818.1 812.0M647.2 818.1L818.2 818.9M647.3 825.0L818.3 825.8M647.4 831.9L818.4 832.7M647.5 838.8L818.5 839.6M647.6 845.7L818.6 846.5M647.7 852.6L818.7 853.4M647.8 859.5L818.8 860.3M647.9 866.4L818.9 867.2M648.1 873.3L819.1 874.1M648.2 880.2L819.2 881.0M648.3 887.1L819.3 887.9M648.4 894.0L819.4 894.8M648.5 900.9L819.5 901.7M648.6 907.8L819.6 908.6M648.7 914.7L819.7 915.5M648.8 921.6L819.8 922.4" stroke="#d8141c" stroke-width=".8" fill="none" opacity=".75"/><path d="M773.6 164.8L945.6 165.6M773.7 171.7L945.7 172.5M773.8 178.6L945.8 179.4M773.9 185.5L945.9 186.3M774.0 192.4L946.0 193.2M774.1 199.3L946.1 200.1M774.2 206.2L946.2 207.0M774.3 213.1L946.3 213.9M774.4 220.0L946.4 220.8M774.5 226.9L946.5 227.7M774.6 233.8L946.6 234.6M774.8 240.7L946.8 241.5M774.9 247.6L946.9 248.4M775.0 254.5L947.0 255.3M775.1 261.4L947.1 262.2M775.2 268.3L947.2 269.1M775.3 275.2L947.3 276.0M775.4 282.1L947.4 282.9M775.5 289.0L947.5 289.8M775.6 295.9L947.6 296.7M775.7 302.8L947.7 303.6M775.8 309.7L947.8 310.5M775.9 316.6L947.9 317.4M776.0 323.5L948.0 324.3M776.1 330.4L948.1 331.2M776.2 337.3L948.2 338.1M776.4 344.2L948.4 345.0M776.5 351.1L948.5 351.9M776.6 358.0L948.6 358.8M776.7 364.9L948.7 365.7M776.8 371.8L948.8 372.6M776.9 378.7L948.9 379.5M777.0 385.6L949.0 386.4M777.1 392.5L949.1 393.3M777.2 399.4L949.2 400.2M777.3 406.3L949.3 407.1M777.4 413.2L949.4 414.0M777.5 420.1L949.5 420.9M777.6 427.0L949.6 427.8M777.7 433.9L949.7 434.7M777.9 440.8L949.9 441.6M778.0 447.7L950.0 448.5M778.1 454.6L950.1 455.4M778.2 461.5L950.2 462.3M778.3 468.4L950.3 469.2M778.4 475.3L950.4 476.1M778.5 482.2L950.5 483.0M778.6 489.1L950.6 489.9M778.7 496.0L950.7 496.8M778.8 502.9L950.8 503.7M778.9 509.8L950.9 510.6M779.0 516.7L951.0 517.5M779.1 523.6L951.1 524.4M779.2 530.5L951.2 531.3M779.3 537.4L951.3 538.2M779.5 544.3L951.5 545.1M779.6 551.2L951.6 552.0M779.7 558.1L951.7 558.9M779.8 565.0L951.8 565.8M779.9 571.9L951.9 572.7M780.0 578.8L952.0 579.6M780.1 585.7L952.1 586.5M780.2 592.6L952.2 593.4M780.3 599.5L952.3 600.3M780.4 606.4L952.4 607.2M780.5 613.3L952.5 614.1M780.6 620.2L952.6 621.0M780.7 627.1L952.7 627.9M780.8 634.0L952.8 634.8M781.0 640.9L953.0 641.7M781.1 647.8L953.1 648.6M781.2 654.7L953.2 655.5M781.3 661.6L953.3 662.4M781.4 668.5L953.4 669.3M781.5 675.4L953.5 676.2M781.6 682.3L953.6 683.1M781.7 689.2L953.7 690.0M781.8 696.1L953.8 696.9M781.9 703.0L953.9 703.8M782.0 709.9L954.0 710.7M782.1 716.8L954.1 717.6M782.2 723.7L954.2 724.5M782.3 730.6L954.3 731.4M782.5 737.5L954.5 738.3M782.6 744.4L954.6 745.2M782.7 751.3L954.7 752.1M782.8 758.2L954.8 759.0M782.9 765.1L954.9 765.9M783.0 772.0L955.0 772.8M783.1 778.9L955.1 779.7M783.2 785.8L955.2 786.6M783.3 792.7L955.3 793.5M783.4 799.6L955.4 800.4M783.5 806.5L955.5 807.3M783.6 813.4L955.6 814.2M783.7 820.3L955.7 821.1M783.8 827.2L955.8 828.0M783.9 834.1L955.9 834.9M784.1 841.0L956.1 841.8M784.2 847.9L956.2 848.7M784.3 854.8L956.3 855.6M784.4 861.7L956.4 862.5M784.5 868.6L956.5 869.4M784.6 875.5L956.6 876.3M784.7 882.4L956.7 883.2M784.8 889.3L956.8 890.1M784.9 896.2L956.9 897.0M785.0 903.1L957.0 903.9M785.1 910.0L957.1 910.8M785.2 916.9L957.2 917.7" stroke="#d8141c" stroke-width=".8" fill="none" opacity=".75"/><path d="M637.8 211.9L672.6 211.6M637.9 218.8L672.7 218.5M638.0 225.7L672.8 225.4M638.1 232.6L672.9 232.3M638.2 239.5L673.0 239.2M638.3 246.4L673.1 246.1M638.4 253.3L673.2 253.0M638.6 260.2L673.3 259.9M638.7 267.1L673.4 266.8M638.8 274.0L673.5 273.7M638.9 280.9L673.6 280.6M639.0 287.8L673.7 287.5M639.1 294.7L673.8 294.4M639.2 301.6L674.0 301.3M639.3 308.5L674.1 308.2M639.4 315.4L674.2 315.1M639.5 322.3L674.3 322.0M639.6 329.2L674.4 328.9M639.7 336.1L674.5 335.8M639.8 343.0L674.6 342.7M639.9 349.9L674.7 349.6M640.1 356.8L674.8 356.5M640.2 363.7L674.9 363.4M640.3 370.6L675.0 370.3M640.4 377.5L675.1 377.2M640.5 384.4L675.2 384.1M640.6 391.3L675.3 391.0M640.7 398.2L675.4 397.9M640.8 405.1L675.6 404.8M640.9 412.0L675.7 411.7M641.0 418.9L675.8 418.6M641.1 425.8L675.9 425.5M641.2 432.7L676.0 432.4M641.3 439.6L676.1 439.3M641.4 446.5L676.2 446.2M641.5 453.4L676.3 453.1M641.7 460.3L676.4 460.0M641.8 467.2L676.5 466.9M641.9 474.1L676.6 473.8M642.0 481.0L676.7 480.7M642.1 487.9L676.8 487.6M642.2 494.8L676.9 494.5M642.3 501.7L677.1 501.4M642.4 508.6L677.2 508.3M642.5 515.5L677.3 515.2M642.6 522.4L677.4 522.1M642.7 529.3L677.5 529.0M642.8 536.2L677.6 535.9M642.9 543.1L677.7 542.8M643.0 550.0L677.8 549.7M643.2 556.9L677.9 556.6M643.3 563.8L678.0 563.5M643.4 570.7L678.1 570.4M643.5 577.6L678.2 577.3M643.6 584.5L678.3 584.2M643.7 591.4L678.4 591.1M643.8 598.3L678.5 598.0M643.9 605.2L678.7 604.9M644.0 612.1L678.8 611.8M644.1 619.0L678.9 618.7M644.2 625.9L679.0 625.6M644.3 632.8L679.1 632.5M644.4 639.7L679.2 639.4M644.5 646.6L679.3 646.3M644.6 653.5L679.4 653.2M644.8 660.4L679.5 660.1M644.9 667.3L679.6 667.0M645.0 674.2L679.7 673.9M645.1 681.1L679.8 680.8M645.2 688.0L679.9 687.7M645.3 694.9L680.0 694.6M645.4 701.8L680.2 701.5M645.5 708.7L680.3 708.4M645.6 715.6L680.4 715.3M645.7 722.5L680.5 722.2M645.8 729.4L680.6 729.1M645.9 736.3L680.7 736.0M646.0 743.2L680.8 742.9M646.1 750.1L680.9 749.8M646.3 757.0L681.0 756.7M646.4 763.9L681.1 763.6M646.5 770.8L681.2 770.5M646.6 777.7L681.3 777.4M646.7 784.6L681.4 784.3M646.8 791.5L681.5 791.2M646.9 798.4L681.7 798.1M647.0 805.3L681.8 805.0M647.1 812.2L681.9 811.9M647.2 819.1L682.0 818.8M647.3 826.0L682.1 825.7M647.4 832.9L682.2 832.6M647.5 839.8L682.3 839.5M647.6 846.7L682.4 846.4M647.8 853.6L682.5 853.3M647.9 860.5L682.6 860.2M648.0 867.4L682.7 867.1M648.1 874.3L682.8 874.0M648.2 881.2L682.9 880.9M648.3 888.1L683.0 887.8M648.4 895.0L683.1 894.7M648.5 901.9L683.3 901.6M648.6 908.8L683.4 908.5M648.7 915.7L683.5 915.4" stroke="#c4304a" stroke-width="3" fill="none" opacity=".55"/><path d="M773.6 163.4L808.1 163.1M773.7 170.3L808.2 170.0M773.8 177.2L808.3 176.9M773.9 184.1L808.4 183.8M774.0 191.0L808.5 190.7M774.1 197.9L808.6 197.6M774.2 204.8L808.7 204.5M774.3 211.7L808.8 211.4M774.4 218.6L808.9 218.3M774.5 225.5L809.0 225.2M774.6 232.4L809.1 232.1M774.7 239.3L809.2 239.0M774.8 246.2L809.3 245.9M774.9 253.1L809.4 252.8M775.0 260.0L809.5 259.7M775.2 266.9L809.7 266.6M775.3 273.8L809.8 273.5M775.4 280.7L809.9 280.4M775.5 287.6L810.0 287.3M775.6 294.5L810.1 294.2M775.7 301.4L810.2 301.1M775.8 308.3L810.3 308.0M775.9 315.2L810.4 314.9M776.0 322.1L810.5 321.8M776.1 329.0L810.6 328.7M776.2 335.9L810.7 335.6M776.3 342.8L810.8 342.5M776.4 349.7L810.9 349.4M776.5 356.6L811.0 356.3M776.7 363.5L811.2 363.2M776.8 370.4L811.3 370.1M776.9 377.3L811.4 377.0M777.0 384.2L811.5 383.9M777.1 391.1L811.6 390.8M777.2 398.0L811.7 397.7M777.3 404.9L811.8 404.6M777.4 411.8L811.9 411.5M777.5 418.7L812.0 418.4M777.6 425.6L812.1 425.3M777.7 432.5L812.2 432.2M777.8 439.4L812.3 439.1M777.9 446.3L812.4 446.0M778.0 453.2L812.5 452.9M778.2 460.1L812.7 459.8M778.3 467.0L812.8 466.7M778.4 473.9L812.9 473.6M778.5 480.8L813.0 480.5M778.6 487.7L813.1 487.4M778.7 494.6L813.2 494.3M778.8 501.5L813.3 501.2M778.9 508.4L813.4 508.1M779.0 515.3L813.5 515.0M779.1 522.2L813.6 521.9M779.2 529.1L813.7 528.8M779.3 536.0L813.8 535.7M779.4 542.9L813.9 542.6M779.5 549.8L814.0 549.5M779.6 556.7L814.1 556.4M779.8 563.6L814.3 563.3M779.9 570.5L814.4 570.2M780.0 577.4L814.5 577.1M780.1 584.3L814.6 584.0M780.2 591.2L814.7 590.9M780.3 598.1L814.8 597.8M780.4 605.0L814.9 604.7M780.5 611.9L815.0 611.6M780.6 618.8L815.1 618.5M780.7 625.7L815.2 625.4M780.8 632.6L815.3 632.3M780.9 639.5L815.4 639.2M781.0 646.4L815.5 646.1M781.1 653.3L815.6 653.0M781.3 660.2L815.8 659.9M781.4 667.1L815.9 666.8M781.5 674.0L816.0 673.7M781.6 680.9L816.1 680.6M781.7 687.8L816.2 687.5M781.8 694.7L816.3 694.4M781.9 701.6L816.4 701.3M782.0 708.5L816.5 708.2M782.1 715.4L816.6 715.1M782.2 722.3L816.7 722.0M782.3 729.2L816.8 728.9M782.4 736.1L816.9 735.8M782.5 743.0L817.0 742.7M782.6 749.9L817.1 749.6M782.8 756.8L817.3 756.5M782.9 763.7L817.4 763.4M783.0 770.6L817.5 770.3M783.1 777.5L817.6 777.2M783.2 784.4L817.7 784.1M783.3 791.3L817.8 791.0M783.4 798.2L817.9 797.9M783.5 805.1L818.0 804.8M783.6 812.0L818.1 811.7M783.7 818.9L818.2 818.6M783.8 825.8L818.3 825.5M783.9 832.7L818.4 832.4M784.0 839.6L818.5 839.3M784.1 846.5L818.6 846.2M784.2 853.4L818.7 853.1M784.4 860.3L818.9 860.0M784.5 867.2L819.0 866.9M784.6 874.1L819.1 873.8M784.7 881.0L819.2 880.7M784.8 887.9L819.3 887.6M784.9 894.8L819.4 894.5M785.0 901.7L819.5 901.4M785.1 908.6L819.6 908.3M785.2 915.5L819.7 915.2" stroke="#d8141c" stroke-width="1.4" fill="none" opacity=".9"/></svg></div><div class="t" style="left:199px;top:1162px;letter-spacing:-0.46px">Lat: 43.3778709693, Lon: -70.6542353854</div><div class="a" style="left:1180px;top:640px;width:1px;height:17px;background-image:linear-gradient(#b8b8b8 1px,transparent 1px);background-size:1px 3px"></div><div class="a" style="left:189px;top:640px;width:1px;height:17px;background-image:linear-gradient(#b8b8b8 1px,transparent 1px);background-size:1px 3px"></div><div class="a" style="left:97px;top:832px;width:239px;height:188px;background:#fff;border:1px solid #a0a0a0;box-shadow:1px 1px 2px rgba(0,0,0,.25)"></div><div class="a" style="left:98px;top:833px;width:237px;height:22px;background:#0078d7"></div><div class="t" style="left:125px;top:837px;color:#fff">Add reference images to project...</div><div class="t" style="left:125px;top:861px;">Edit Radiometric Profile...</div><div class="a" style="left:102px;top:878px;width:229px;height:1px;background:#a0a0a0"></div><div class="t" style="left:125px;top:886px;">Select Highlighted</div><div class="t" style="left:125px;top:909px;">Unselect Highlighted</div><div class="a" style="left:102px;top:926px;width:229px;height:1px;background:#a0a0a0"></div><div class="t" style="left:125px;top:933px;"><u>R</u>efresh</div><div class="t" style="left:125px;top:957px;"><u>E</u>dit</div><div class="t" style="left:125px;top:980px;">Remove</div><div class="t" style="left:125px;top:1003px;">Properties</div><div class="t" style="left:1187px;top:117px;">Editor</div><div class="db" style="left:1572px;top:117px"><svg class="a" style="left:.5px;top:.5px" width="8" height="8" viewBox="0 0 8 8"><rect x="2.5" y="0.5" width="5" height="4" fill="none" stroke="#555"/><rect x="0.5" y="3.5" width="5" height="4" fill="#ededed" stroke="#555"/></svg></div><div class="db" style="left:1586px;top:117px"><svg class="a" style="left:.5px;top:.5px" width="8" height="8" viewBox="0 0 8 8"><path d="M1 1L7 7M7 1L1 7" stroke="#444" stroke-width="2"/></svg></div><div class="t" style="left:1196px;top:150px;font-size:11px;letter-spacing:-0.3px">Zoom</div><div class="a" style="left:1228px;top:145px;width:57px;height:22px;border:1px solid #adadad;border-radius:3px;background:linear-gradient(#fdfdfd,#ececec)"></div><div class="t" style="left:1234px;top:150px;font-size:11px">1 : 1</div><div class="ar d" style="left:1269px;top:154px"></div><svg class="a" style="left:1301px;top:145.200px" width="20" height="20" viewBox="0 0 20 20"><path d="M10 .8L13.800 4.800H11.100V8.900H15.200V6.200L19.200 10L15.200 13.800V11.100H11.100V15.200H13.800L10 19.200L6.200 15.200H8.900V11.100H4.800V13.800L.8 10L4.800 6.200V8.900H8.900V4.800H6.200Z" fill="#3e3e3e"/></svg><svg class="a" style="left:1331.700px;top:143px" width="24" height="24" viewBox="0 0 24 24"><path d="M17 3H5c-1.110 0-2 .9-2 2v14c0 1.100.890 2 2 2h14c1.100 0 2-.9 2-2V7l-4-4zm-5 16c-1.660 0-3-1.340-3-3s1.340-3 3-3 3 1.340 3 3-1.340 3-3 3zm3-10H5V5h10v4z" fill="#000"/></svg><svg class="a" style="left:1365.100px;top:143.300px" width="23.040" height="23.040" viewBox="0 0 24 24"><path d="M12.500 8c-2.650 0-5.050.990-6.900 2.600L2 7v9h9l-3.620-3.620c1.390-1.160 3.160-1.880 5.120-1.880 3.540 0 6.550 2.310 7.600 5.500l2.370-.780C21.080 11.030 17.150 8 12.500 8z" fill="#000"/></svg><div class="a" style="left:1193px;top:196px;width:194px;height:535px;background:#000"></div><div class="a" style="left:1395px;top:196px;width:194px;height:535px;background:#000"></div><div class="a" style="left:1383px;top:743px;width:17px;height:1px;background-image:linear-gradient(90deg,#b8b8b8 1px,transparent 1px);background-size:3px 1px"></div><div class="t" style="left:1187px;top:751px;">Preview</div><div class="db" style="left:1572px;top:751px"><svg class="a" style="left:.5px;top:.5px" width="8" height="8" viewBox="0 0 8 8"><rect x="2.5" y="0.5" width="5" height="4" fill="none" stroke="#555"/><rect x="0.5" y="3.5" width="5" height="4" fill="#ededed" stroke="#555"/></svg></div><div class="db" style="left:1586px;top:751px"><svg class="a" style="left:.5px;top:.5px" width="8" height="8" viewBox="0 0 8 8"><path d="M1 1L7 7M7 1L1 7" stroke="#444" stroke-width="2"/></svg></div><div class="a" style="left:1184px;top:767px;width:414px;height:383px;background:#000"></div><div class="a" style="left:1596px;top:1167px;width:1px;height:1px;background:#a8a8a8"></div><div class="a" style="left:1593px;top:1170px;width:1px;height:1px;background:#a8a8a8"></div><div class="a" style="left:1596px;top:1170px;width:1px;height:1px;background:#a8a8a8"></div><div class="a" style="left:1590px;top:1173px;width:1px;height:1px;background:#a8a8a8"></div><div class="a" style="left:1593px;top:1173px;width:1px;height:1px;background:#a8a8a8"></div><div class="a" style="left:1596px;top:1173px;width:1px;height:1px;background:#a8a8a8"></div><div class="a" style="left:1587px;top:1176px;width:1px;height:1px;background:#a8a8a8"></div><div class="a" style="left:1590px;top:1176px;width:1px;height:1px;background:#a8a8a8"></div><div class="a" style="left:1593px;top:1176px;width:1px;height:1px;background:#a8a8a8"></div><div class="a" style="left:1596px;top:1176px;width:1px;height:1px;background:#a8a8a8"></div><div class="a" style="left:1596px;top:1189px;width:1px;height:1px;background:#a8a8a8"></div><div class="a" style="left:1593px;top:1192px;width:1px;height:1px;background:#a8a8a8"></div><div class="a" style="left:1596px;top:1192px;width:1px;height:1px;background:#a8a8a8"></div><div class="a" style="left:1590px;top:1195px;width:1px;height:1px;background:#a8a8a8"></div><div class="a" style="left:1593px;top:1195px;width:1px;height:1px;background:#a8a8a8"></div><div class="a" style="left:1596px;top:1195px;width:1px;height:1px;background:#a8a8a8"></div><div class="a" style="left:1587px;top:1198px;width:1px;height:1px;background:#a8a8a8"></div><div class="a" style="left:1590px;top:1198px;width:1px;height:1px;background:#a8a8a8"></div><div class="a" style="left:1593px;top:1198px;width:1px;height:1px;background:#a8a8a8"></div><div class="a" style="left:1596px;top:1198px;width:1px;height:1px;background:#a8a8a8"></div><div class="a" style="left:1170px;top:1167px;width:5px;height:11px;background-image:radial-gradient(circle,#b8b8b8 .6px,transparent 1px);background-size:3px 3px"></div></body></html>
